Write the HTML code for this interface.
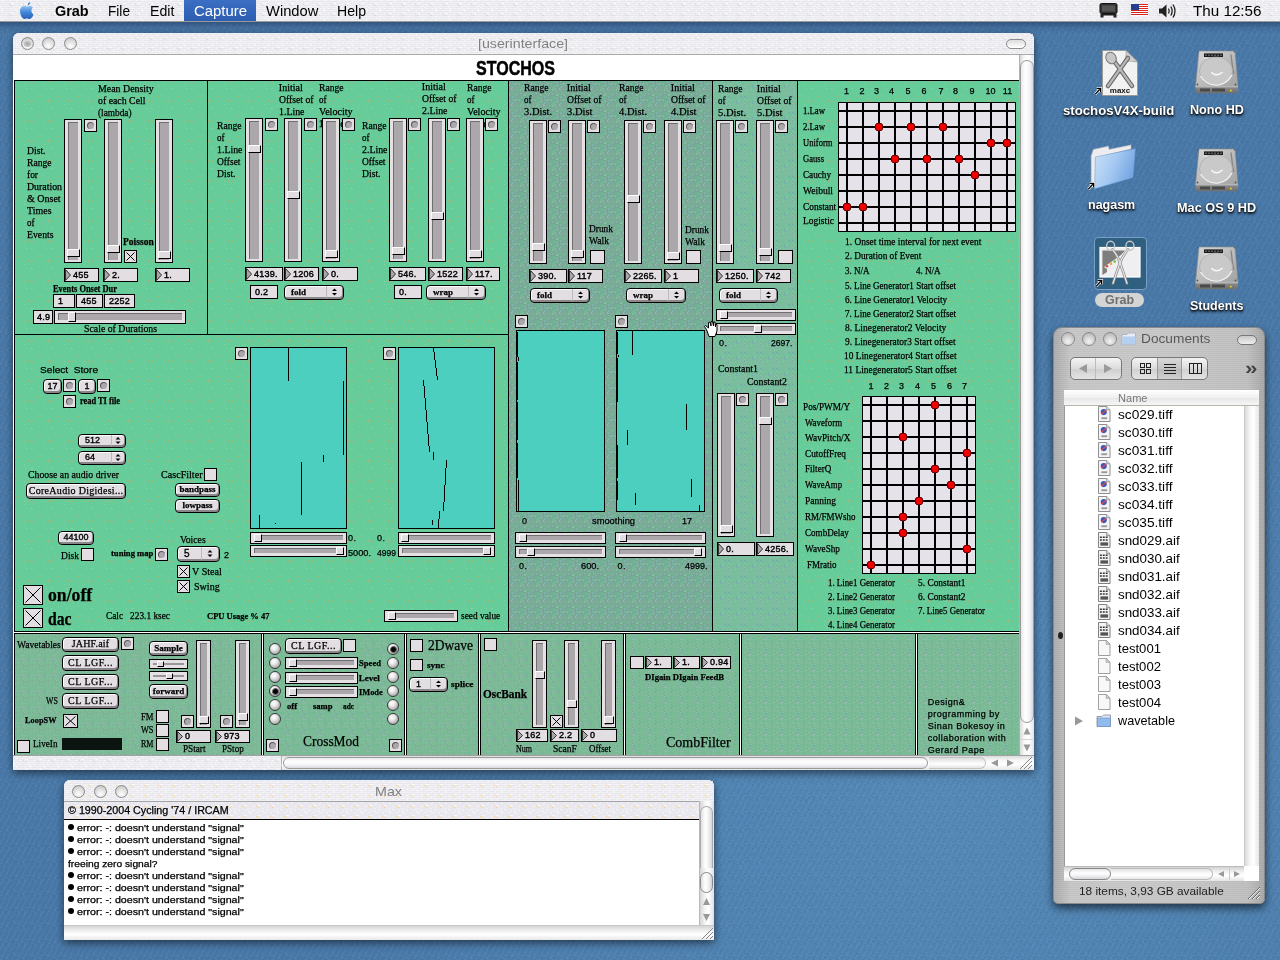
<!DOCTYPE html><html><head><meta charset="utf-8"><title>STOCHOS</title><style>
html,body{margin:0;padding:0}
body{width:1280px;height:960px;overflow:hidden;position:relative;background:#4979A9;font-family:"Liberation Sans",sans-serif;}
div{position:absolute;box-sizing:border-box}
.t{white-space:pre;transform-origin:0 50%;color:#000}
.ts{font-family:"Liberation Serif",serif;-webkit-text-stroke:0.25px #000}
.tn{font-family:"Liberation Sans",sans-serif}
.tk{-webkit-text-stroke:0.25px #000}
.tm{font-family:"Liberation Mono",monospace}
.sl{border:1px solid #000;background:#E4E0E4}
.trk{background:#ABA7AB;border-left:1px solid #6f6f6f;border-top:1px solid #6f6f6f}
.kn{background:#E0DCE0;border-top:1px solid #fff;border-left:1px solid #fff;border-right:1px solid #000;border-bottom:1px solid #000}
.bx{border:1px solid #000;background:#E2DEE2}
.bc{border-radius:50%;background:#ABA7AB;border-top:1px solid #555;border-left:1px solid #555}
.pb{border:1px solid #000;border-radius:4px;background:#E2DEE2;box-shadow:inset -1px -2px 0 #8a868a, inset 1px 1px 0 #fff}
.ra{border-radius:50%;border:1px solid #3a3a3a;background:radial-gradient(circle at 38% 32%,#fff 0%,#ececec 30%,#a4a4a4 80%,#777 100%)}
.rd{left:1.5px;top:1.5px;right:1.5px;bottom:1.5px;border-radius:50%;background:#000;border:1.5px solid #666}
.pin{background:repeating-linear-gradient(180deg,#F1F1F5 0,#F1F1F5 1px,#E7E7EC 1px,#E7E7EC 2px)}
.pg{background:#66CC99}
.pd{background:#74AE92}
.pm{background:#7ABD9C}
.pbm{background:#7ABB96}
.bk{background:#000}
.wb{border-radius:50%;border:1px solid #8c8c8c;background:radial-gradient(circle at 50% 75%,#fff 0%,#e4e4e4 45%,#bdbdbd 100%)}
.cy{background:#4DCFC0;border:1px solid #000}
.lbl{color:#fff;font-weight:bold;text-shadow:0 1px 2px #000,0 1px 1px #000}
</style></head><body><div id="w" style="left:0;top:0;width:1280px;height:960px;will-change:transform">
<svg width="0" height="0" style="position:absolute"><defs><pattern id="dg" width="20" height="20" patternUnits="userSpaceOnUse"><rect x="4" y="18" width="1" height="1" fill="#D9A05B" opacity="0.55"/><rect x="2" y="8" width="1" height="1" fill="#D9A05B" opacity="0.55"/><rect x="3" y="15" width="1" height="1" fill="#D9A05B" opacity="0.55"/><rect x="14" y="15" width="1" height="1" fill="#D9A05B" opacity="0.55"/><rect x="12" y="6" width="1" height="1" fill="#D9A05B" opacity="0.55"/><rect x="0" y="12" width="1" height="1" fill="#D9A05B" opacity="0.55"/><rect x="13" y="19" width="1" height="1" fill="#D9A05B" opacity="0.55"/><rect x="0" y="14" width="1" height="1" fill="#D9A05B" opacity="0.55"/><rect x="8" y="7" width="1" height="1" fill="#D9A05B" opacity="0.55"/><rect x="18" y="3" width="1" height="1" fill="#D9A05B" opacity="0.55"/><rect x="10" y="0" width="1" height="1" fill="#D9A05B" opacity="0.55"/><rect x="0" y="0" width="1" height="1" fill="#D9A05B" opacity="0.55"/><rect x="17" y="0" width="1" height="1" fill="#D9A05B" opacity="0.55"/><rect x="13" y="0" width="1" height="1" fill="#D9A05B" opacity="0.55"/><rect x="16" y="7" width="1" height="1" fill="#8ad6b0" opacity="0.7"/><rect x="17" y="7" width="1" height="1" fill="#8ad6b0" opacity="0.7"/><rect x="11" y="7" width="1" height="1" fill="#8ad6b0" opacity="0.7"/><rect x="7" y="14" width="1" height="1" fill="#8ad6b0" opacity="0.7"/><rect x="9" y="0" width="1" height="1" fill="#8ad6b0" opacity="0.7"/><rect x="13" y="17" width="1" height="1" fill="#8ad6b0" opacity="0.7"/><rect x="3" y="5" width="1" height="1" fill="#8ad6b0" opacity="0.7"/><rect x="9" y="3" width="1" height="1" fill="#8ad6b0" opacity="0.7"/></pattern><pattern id="dd" width="16" height="16" patternUnits="userSpaceOnUse"><rect x="1" y="2" width="1" height="1" fill="#9A96B0" opacity="0.6"/><rect x="2" y="11" width="1" height="1" fill="#9A96B0" opacity="0.6"/><rect x="5" y="9" width="1" height="1" fill="#9A96B0" opacity="0.6"/><rect x="8" y="6" width="1" height="1" fill="#9A96B0" opacity="0.6"/><rect x="1" y="5" width="1" height="1" fill="#9A96B0" opacity="0.6"/><rect x="13" y="12" width="1" height="1" fill="#9A96B0" opacity="0.6"/><rect x="11" y="14" width="1" height="1" fill="#9A96B0" opacity="0.6"/><rect x="8" y="1" width="1" height="1" fill="#9A96B0" opacity="0.6"/><rect x="0" y="11" width="1" height="1" fill="#9A96B0" opacity="0.6"/><rect x="14" y="10" width="1" height="1" fill="#9A96B0" opacity="0.6"/><rect x="12" y="13" width="1" height="1" fill="#9A96B0" opacity="0.6"/><rect x="5" y="5" width="1" height="1" fill="#9A96B0" opacity="0.6"/><rect x="7" y="7" width="1" height="1" fill="#9A96B0" opacity="0.6"/><rect x="0" y="5" width="1" height="1" fill="#9A96B0" opacity="0.6"/><rect x="10" y="5" width="1" height="1" fill="#9A96B0" opacity="0.6"/><rect x="4" y="11" width="1" height="1" fill="#9A96B0" opacity="0.6"/><rect x="5" y="14" width="1" height="1" fill="#9A96B0" opacity="0.6"/><rect x="13" y="11" width="1" height="1" fill="#9A96B0" opacity="0.6"/><rect x="11" y="11" width="1" height="1" fill="#9A96B0" opacity="0.6"/><rect x="14" y="5" width="1" height="1" fill="#9A96B0" opacity="0.6"/><rect x="12" y="14" width="1" height="1" fill="#9A96B0" opacity="0.6"/><rect x="7" y="15" width="1" height="1" fill="#9A96B0" opacity="0.6"/><rect x="8" y="15" width="1" height="1" fill="#9A96B0" opacity="0.6"/><rect x="14" y="11" width="1" height="1" fill="#9A96B0" opacity="0.6"/><rect x="14" y="15" width="1" height="1" fill="#9A96B0" opacity="0.6"/><rect x="7" y="10" width="1" height="1" fill="#9A96B0" opacity="0.6"/><rect x="5" y="8" width="1" height="1" fill="#9A96B0" opacity="0.6"/><rect x="15" y="9" width="1" height="1" fill="#9A96B0" opacity="0.6"/><rect x="9" y="13" width="1" height="1" fill="#9A96B0" opacity="0.6"/><rect x="9" y="6" width="1" height="1" fill="#9A96B0" opacity="0.6"/><rect x="15" y="11" width="1" height="1" fill="#9A96B0" opacity="0.6"/><rect x="2" y="10" width="1" height="1" fill="#9A96B0" opacity="0.6"/><rect x="0" y="6" width="1" height="1" fill="#9A96B0" opacity="0.6"/><rect x="3" y="1" width="1" height="1" fill="#9A96B0" opacity="0.6"/><rect x="1" y="8" width="1" height="1" fill="#9A96B0" opacity="0.6"/><rect x="7" y="3" width="1" height="1" fill="#9A96B0" opacity="0.6"/><rect x="4" y="8" width="1" height="1" fill="#9A96B0" opacity="0.6"/><rect x="7" y="6" width="1" height="1" fill="#9A96B0" opacity="0.6"/><rect x="1" y="13" width="1" height="1" fill="#9A96B0" opacity="0.6"/><rect x="1" y="1" width="1" height="1" fill="#9A96B0" opacity="0.6"/><rect x="5" y="7" width="1" height="1" fill="#9A96B0" opacity="0.6"/><rect x="0" y="2" width="1" height="1" fill="#9A96B0" opacity="0.6"/><rect x="3" y="2" width="1" height="1" fill="#9A96B0" opacity="0.6"/><rect x="0" y="1" width="1" height="1" fill="#9A96B0" opacity="0.6"/><rect x="8" y="4" width="1" height="1" fill="#9A96B0" opacity="0.6"/><rect x="0" y="12" width="1" height="1" fill="#9A96B0" opacity="0.6"/><rect x="1" y="7" width="1" height="1" fill="#9A96B0" opacity="0.6"/><rect x="4" y="1" width="1" height="1" fill="#9A96B0" opacity="0.6"/><rect x="3" y="9" width="1" height="1" fill="#9A96B0" opacity="0.6"/><rect x="10" y="15" width="1" height="1" fill="#9A96B0" opacity="0.6"/><rect x="0" y="9" width="1" height="1" fill="#9A96B0" opacity="0.6"/><rect x="14" y="1" width="1" height="1" fill="#9A96B0" opacity="0.6"/><rect x="8" y="12" width="1" height="1" fill="#86D0A6" opacity="0.6"/><rect x="4" y="15" width="1" height="1" fill="#86D0A6" opacity="0.6"/><rect x="7" y="2" width="1" height="1" fill="#86D0A6" opacity="0.6"/><rect x="10" y="3" width="1" height="1" fill="#86D0A6" opacity="0.6"/><rect x="0" y="14" width="1" height="1" fill="#86D0A6" opacity="0.6"/><rect x="4" y="12" width="1" height="1" fill="#86D0A6" opacity="0.6"/><rect x="15" y="10" width="1" height="1" fill="#86D0A6" opacity="0.6"/><rect x="4" y="10" width="1" height="1" fill="#86D0A6" opacity="0.6"/><rect x="8" y="8" width="1" height="1" fill="#86D0A6" opacity="0.6"/><rect x="13" y="0" width="1" height="1" fill="#86D0A6" opacity="0.6"/><rect x="4" y="5" width="1" height="1" fill="#86D0A6" opacity="0.6"/><rect x="5" y="3" width="1" height="1" fill="#86D0A6" opacity="0.6"/><rect x="14" y="7" width="1" height="1" fill="#86D0A6" opacity="0.6"/><rect x="7" y="14" width="1" height="1" fill="#86D0A6" opacity="0.6"/><rect x="2" y="8" width="1" height="1" fill="#86D0A6" opacity="0.6"/><rect x="2" y="7" width="1" height="1" fill="#86D0A6" opacity="0.6"/><rect x="11" y="8" width="1" height="1" fill="#86D0A6" opacity="0.6"/><rect x="13" y="8" width="1" height="1" fill="#86D0A6" opacity="0.6"/><rect x="0" y="4" width="1" height="1" fill="#86D0A6" opacity="0.6"/><rect x="1" y="12" width="1" height="1" fill="#86D0A6" opacity="0.6"/><rect x="13" y="5" width="1" height="1" fill="#86D0A6" opacity="0.6"/><rect x="3" y="0" width="1" height="1" fill="#86D0A6" opacity="0.6"/><rect x="3" y="6" width="1" height="1" fill="#86D0A6" opacity="0.6"/><rect x="14" y="9" width="1" height="1" fill="#86D0A6" opacity="0.6"/><rect x="12" y="6" width="1" height="1" fill="#86D0A6" opacity="0.6"/><rect x="6" y="13" width="1" height="1" fill="#86D0A6" opacity="0.6"/><rect x="0" y="3" width="1" height="1" fill="#86D0A6" opacity="0.6"/><rect x="11" y="9" width="1" height="1" fill="#86D0A6" opacity="0.6"/><rect x="0" y="13" width="1" height="1" fill="#86D0A6" opacity="0.6"/><rect x="3" y="3" width="1" height="1" fill="#86D0A6" opacity="0.6"/><rect x="15" y="14" width="1" height="1" fill="#86D0A6" opacity="0.6"/><rect x="6" y="2" width="1" height="1" fill="#86D0A6" opacity="0.6"/><rect x="9" y="2" width="1" height="1" fill="#86D0A6" opacity="0.6"/><rect x="6" y="3" width="1" height="1" fill="#86D0A6" opacity="0.6"/><rect x="11" y="12" width="1" height="1" fill="#86D0A6" opacity="0.6"/><rect x="14" y="4" width="1" height="1" fill="#86D0A6" opacity="0.6"/><rect x="3" y="8" width="1" height="1" fill="#86D0A6" opacity="0.6"/><rect x="15" y="1" width="1" height="1" fill="#86D0A6" opacity="0.6"/><rect x="15" y="13" width="1" height="1" fill="#86D0A6" opacity="0.6"/><rect x="12" y="7" width="1" height="1" fill="#86D0A6" opacity="0.6"/><rect x="5" y="15" width="1" height="1" fill="#6A8AC8" opacity="0.45"/><rect x="8" y="13" width="1" height="1" fill="#6A8AC8" opacity="0.45"/><rect x="2" y="3" width="1" height="1" fill="#6A8AC8" opacity="0.45"/><rect x="5" y="4" width="1" height="1" fill="#6A8AC8" opacity="0.45"/><rect x="13" y="2" width="1" height="1" fill="#6A8AC8" opacity="0.45"/><rect x="2" y="1" width="1" height="1" fill="#6A8AC8" opacity="0.45"/><rect x="4" y="9" width="1" height="1" fill="#6A8AC8" opacity="0.45"/><rect x="10" y="14" width="1" height="1" fill="#6A8AC8" opacity="0.45"/><rect x="3" y="4" width="1" height="1" fill="#6A8AC8" opacity="0.45"/><rect x="13" y="3" width="1" height="1" fill="#6A8AC8" opacity="0.45"/></pattern><pattern id="dm" width="16" height="16" patternUnits="userSpaceOnUse"><rect x="7" y="4" width="1" height="1" fill="#6A8AC8" opacity="0.5"/><rect x="11" y="15" width="1" height="1" fill="#6A8AC8" opacity="0.5"/><rect x="2" y="0" width="1" height="1" fill="#6A8AC8" opacity="0.5"/><rect x="15" y="8" width="1" height="1" fill="#6A8AC8" opacity="0.5"/><rect x="7" y="6" width="1" height="1" fill="#6A8AC8" opacity="0.5"/><rect x="15" y="15" width="1" height="1" fill="#6A8AC8" opacity="0.5"/><rect x="12" y="4" width="1" height="1" fill="#6A8AC8" opacity="0.5"/><rect x="12" y="0" width="1" height="1" fill="#6A8AC8" opacity="0.5"/><rect x="2" y="5" width="1" height="1" fill="#6A8AC8" opacity="0.5"/><rect x="1" y="9" width="1" height="1" fill="#B4B0C8" opacity="0.55"/><rect x="0" y="8" width="1" height="1" fill="#B4B0C8" opacity="0.55"/><rect x="15" y="12" width="1" height="1" fill="#B4B0C8" opacity="0.55"/><rect x="13" y="12" width="1" height="1" fill="#B4B0C8" opacity="0.55"/><rect x="14" y="4" width="1" height="1" fill="#B4B0C8" opacity="0.55"/><rect x="11" y="3" width="1" height="1" fill="#B4B0C8" opacity="0.55"/><rect x="1" y="4" width="1" height="1" fill="#B4B0C8" opacity="0.55"/><rect x="15" y="6" width="1" height="1" fill="#B4B0C8" opacity="0.55"/><rect x="8" y="13" width="1" height="1" fill="#B4B0C8" opacity="0.55"/><rect x="9" y="13" width="1" height="1" fill="#B4B0C8" opacity="0.55"/><rect x="12" y="11" width="1" height="1" fill="#B4B0C8" opacity="0.55"/><rect x="13" y="7" width="1" height="1" fill="#B4B0C8" opacity="0.55"/><rect x="10" y="0" width="1" height="1" fill="#70D8A8" opacity="0.6"/><rect x="8" y="5" width="1" height="1" fill="#70D8A8" opacity="0.6"/><rect x="10" y="3" width="1" height="1" fill="#70D8A8" opacity="0.6"/><rect x="6" y="8" width="1" height="1" fill="#70D8A8" opacity="0.6"/><rect x="9" y="3" width="1" height="1" fill="#70D8A8" opacity="0.6"/><rect x="2" y="15" width="1" height="1" fill="#70D8A8" opacity="0.6"/><rect x="15" y="2" width="1" height="1" fill="#70D8A8" opacity="0.6"/><rect x="11" y="2" width="1" height="1" fill="#70D8A8" opacity="0.6"/><rect x="13" y="4" width="1" height="1" fill="#70D8A8" opacity="0.6"/><rect x="0" y="9" width="1" height="1" fill="#70D8A8" opacity="0.6"/><rect x="13" y="13" width="1" height="1" fill="#70D8A8" opacity="0.6"/><rect x="3" y="1" width="1" height="1" fill="#70D8A8" opacity="0.6"/><rect x="1" y="12" width="1" height="1" fill="#70D8A8" opacity="0.6"/><rect x="10" y="8" width="1" height="1" fill="#70D8A8" opacity="0.6"/><rect x="7" y="1" width="1" height="1" fill="#70D8A8" opacity="0.6"/><rect x="9" y="0" width="1" height="1" fill="#70D8A8" opacity="0.6"/><rect x="2" y="3" width="1" height="1" fill="#70D8A8" opacity="0.6"/><rect x="1" y="6" width="1" height="1" fill="#70D8A8" opacity="0.6"/></pattern><pattern id="db" width="16" height="16" patternUnits="userSpaceOnUse"><rect x="7" y="9" width="1" height="1" fill="#B4B0C8" opacity="0.5"/><rect x="3" y="12" width="1" height="1" fill="#B4B0C8" opacity="0.5"/><rect x="15" y="4" width="1" height="1" fill="#B4B0C8" opacity="0.5"/><rect x="2" y="2" width="1" height="1" fill="#B4B0C8" opacity="0.5"/><rect x="0" y="12" width="1" height="1" fill="#B4B0C8" opacity="0.5"/><rect x="9" y="1" width="1" height="1" fill="#B4B0C8" opacity="0.5"/><rect x="7" y="11" width="1" height="1" fill="#B4B0C8" opacity="0.5"/><rect x="8" y="5" width="1" height="1" fill="#B4B0C8" opacity="0.5"/><rect x="3" y="8" width="1" height="1" fill="#B4B0C8" opacity="0.5"/><rect x="6" y="0" width="1" height="1" fill="#B4B0C8" opacity="0.5"/><rect x="8" y="8" width="1" height="1" fill="#B4B0C8" opacity="0.5"/><rect x="6" y="5" width="1" height="1" fill="#B4B0C8" opacity="0.5"/><rect x="9" y="9" width="1" height="1" fill="#B4B0C8" opacity="0.5"/><rect x="11" y="2" width="1" height="1" fill="#B4B0C8" opacity="0.5"/><rect x="10" y="12" width="1" height="1" fill="#B4B0C8" opacity="0.5"/><rect x="7" y="5" width="1" height="1" fill="#B4B0C8" opacity="0.5"/><rect x="7" y="15" width="1" height="1" fill="#9A86A8" opacity="0.45"/><rect x="8" y="2" width="1" height="1" fill="#9A86A8" opacity="0.45"/><rect x="9" y="0" width="1" height="1" fill="#9A86A8" opacity="0.45"/><rect x="6" y="13" width="1" height="1" fill="#9A86A8" opacity="0.45"/><rect x="13" y="9" width="1" height="1" fill="#9A86A8" opacity="0.45"/><rect x="13" y="14" width="1" height="1" fill="#9A86A8" opacity="0.45"/><rect x="5" y="7" width="1" height="1" fill="#9A86A8" opacity="0.45"/><rect x="9" y="8" width="1" height="1" fill="#9A86A8" opacity="0.45"/><rect x="1" y="2" width="1" height="1" fill="#9A86A8" opacity="0.45"/><rect x="1" y="14" width="1" height="1" fill="#9A86A8" opacity="0.45"/><rect x="8" y="15" width="1" height="1" fill="#6A8AC8" opacity="0.4"/><rect x="10" y="4" width="1" height="1" fill="#6A8AC8" opacity="0.4"/><rect x="6" y="2" width="1" height="1" fill="#6A8AC8" opacity="0.4"/><rect x="13" y="6" width="1" height="1" fill="#6A8AC8" opacity="0.4"/><rect x="14" y="8" width="1" height="1" fill="#6A8AC8" opacity="0.4"/><rect x="5" y="11" width="1" height="1" fill="#6A8AC8" opacity="0.4"/><rect x="13" y="10" width="1" height="1" fill="#6A8AC8" opacity="0.4"/><rect x="6" y="10" width="1" height="1" fill="#6A8AC8" opacity="0.4"/><rect x="3" y="1" width="1" height="1" fill="#86D0A6" opacity="0.5"/><rect x="7" y="8" width="1" height="1" fill="#86D0A6" opacity="0.5"/><rect x="7" y="3" width="1" height="1" fill="#86D0A6" opacity="0.5"/><rect x="10" y="5" width="1" height="1" fill="#86D0A6" opacity="0.5"/><rect x="9" y="14" width="1" height="1" fill="#86D0A6" opacity="0.5"/><rect x="0" y="1" width="1" height="1" fill="#86D0A6" opacity="0.5"/><rect x="9" y="10" width="1" height="1" fill="#86D0A6" opacity="0.5"/><rect x="0" y="10" width="1" height="1" fill="#86D0A6" opacity="0.5"/><rect x="4" y="13" width="1" height="1" fill="#86D0A6" opacity="0.5"/><rect x="2" y="9" width="1" height="1" fill="#86D0A6" opacity="0.5"/><rect x="6" y="14" width="1" height="1" fill="#86D0A6" opacity="0.5"/><rect x="9" y="4" width="1" height="1" fill="#86D0A6" opacity="0.5"/><rect x="8" y="12" width="1" height="1" fill="#86D0A6" opacity="0.5"/><rect x="5" y="10" width="1" height="1" fill="#86D0A6" opacity="0.5"/></pattern><pattern id="dw" width="14" height="10" patternUnits="userSpaceOnUse"><rect x="9" y="4" width="1" height="1" fill="#E8C870" opacity="0.7"/><rect x="11" y="5" width="1" height="1" fill="#E8C870" opacity="0.7"/><rect x="12" y="8" width="1" height="1" fill="#ffffff" opacity="0.7"/><rect x="0" y="7" width="1" height="1" fill="#ffffff" opacity="0.7"/><rect x="12" y="3" width="1" height="1" fill="#ffffff" opacity="0.7"/><rect x="10" y="0" width="1" height="1" fill="#ffffff" opacity="0.7"/><rect x="2" y="1" width="1" height="1" fill="#ffffff" opacity="0.7"/><rect x="5" y="7" width="1" height="1" fill="#ffffff" opacity="0.7"/><rect x="13" y="3" width="1" height="1" fill="#ffffff" opacity="0.7"/><rect x="6" y="8" width="1" height="1" fill="#ffffff" opacity="0.7"/><rect x="1" y="9" width="1" height="1" fill="#ffffff" opacity="0.7"/><rect x="3" y="0" width="1" height="1" fill="#ffffff" opacity="0.7"/><rect x="11" y="3" width="1" height="1" fill="#ffffff" opacity="0.7"/><rect x="6" y="4" width="1" height="1" fill="#ffffff" opacity="0.7"/><rect x="2" y="6" width="1" height="1" fill="#ffffff" opacity="0.7"/><rect x="2" y="9" width="1" height="1" fill="#ffffff" opacity="0.7"/></pattern><pattern id="dk" width="16" height="16" patternUnits="userSpaceOnUse"><rect x="2" y="15" width="1" height="1" fill="#7AA2CC" opacity="0.22"/><rect x="8" y="1" width="1" height="1" fill="#7AA2CC" opacity="0.22"/><rect x="0" y="4" width="1" height="1" fill="#7AA2CC" opacity="0.22"/><rect x="15" y="11" width="1" height="1" fill="#7AA2CC" opacity="0.22"/><rect x="10" y="0" width="1" height="1" fill="#7AA2CC" opacity="0.22"/><rect x="8" y="15" width="1" height="1" fill="#7AA2CC" opacity="0.22"/><rect x="6" y="13" width="1" height="1" fill="#7AA2CC" opacity="0.22"/><rect x="3" y="6" width="1" height="1" fill="#7AA2CC" opacity="0.22"/><rect x="8" y="2" width="1" height="1" fill="#7AA2CC" opacity="0.22"/><rect x="13" y="10" width="1" height="1" fill="#7AA2CC" opacity="0.22"/><rect x="2" y="11" width="1" height="1" fill="#7AA2CC" opacity="0.22"/><rect x="13" y="8" width="1" height="1" fill="#7AA2CC" opacity="0.22"/><rect x="14" y="3" width="1" height="1" fill="#7AA2CC" opacity="0.22"/><rect x="6" y="9" width="1" height="1" fill="#7AA2CC" opacity="0.22"/><rect x="3" y="1" width="1" height="1" fill="#7AA2CC" opacity="0.22"/><rect x="6" y="11" width="1" height="1" fill="#7AA2CC" opacity="0.22"/><rect x="15" y="6" width="1" height="1" fill="#7AA2CC" opacity="0.22"/><rect x="0" y="11" width="1" height="1" fill="#7AA2CC" opacity="0.22"/><rect x="7" y="13" width="1" height="1" fill="#7AA2CC" opacity="0.22"/><rect x="9" y="11" width="1" height="1" fill="#7AA2CC" opacity="0.22"/><rect x="3" y="2" width="1" height="1" fill="#7AA2CC" opacity="0.22"/><rect x="6" y="3" width="1" height="1" fill="#7AA2CC" opacity="0.22"/><rect x="8" y="9" width="1" height="1" fill="#3A6A98" opacity="0.3"/><rect x="6" y="12" width="1" height="1" fill="#3A6A98" opacity="0.3"/><rect x="15" y="7" width="1" height="1" fill="#3A6A98" opacity="0.3"/><rect x="4" y="6" width="1" height="1" fill="#3A6A98" opacity="0.3"/><rect x="0" y="6" width="1" height="1" fill="#3A6A98" opacity="0.3"/><rect x="5" y="0" width="1" height="1" fill="#3A6A98" opacity="0.3"/><rect x="10" y="9" width="1" height="1" fill="#3A6A98" opacity="0.3"/><rect x="11" y="12" width="1" height="1" fill="#3A6A98" opacity="0.3"/><rect x="12" y="9" width="1" height="1" fill="#3A6A98" opacity="0.3"/><rect x="4" y="15" width="1" height="1" fill="#3A6A98" opacity="0.3"/><rect x="1" y="5" width="1" height="1" fill="#3A6A98" opacity="0.3"/><rect x="13" y="12" width="1" height="1" fill="#3A6A98" opacity="0.3"/><rect x="3" y="14" width="1" height="1" fill="#3A6A98" opacity="0.3"/><rect x="7" y="2" width="1" height="1" fill="#3A6A98" opacity="0.3"/><rect x="14" y="14" width="1" height="1" fill="#3A6A98" opacity="0.3"/><rect x="12" y="2" width="1" height="1" fill="#3A6A98" opacity="0.3"/><rect x="13" y="15" width="1" height="1" fill="#3A6A98" opacity="0.3"/><rect x="9" y="13" width="1" height="1" fill="#3A6A98" opacity="0.3"/><rect x="2" y="6" width="1" height="1" fill="#3A6A98" opacity="0.3"/><rect x="8" y="14" width="1" height="1" fill="#3A6A98" opacity="0.3"/><rect x="15" y="5" width="1" height="1" fill="#3A6A98" opacity="0.3"/><rect x="0" y="0" width="1" height="1" fill="#3A6A98" opacity="0.3"/></pattern></defs></svg>
<div style="left:0;top:0;width:1280px;height:960px;background:radial-gradient(ellipse 620px 520px at 940px 800px,rgba(96,152,196,0.55),rgba(96,152,196,0.25) 60%,rgba(96,152,196,0) 100%)"></div>
<div style="left:0;top:0;width:1280px;height:960px;background:repeating-linear-gradient(118deg,rgba(255,255,255,0.018) 0,rgba(255,255,255,0.018) 2px,rgba(0,0,0,0.018) 2px,rgba(0,0,0,0.018) 5px)"></div>
<svg width="1280" height="960" style="position:absolute;left:0px;top:0px"><rect width="1280" height="960" fill="url(#dk)"/></svg>
<svg width="0" height="0" style="position:absolute"><defs><linearGradient id="hdg" x1="0" y1="0" x2="1" y2="1"><stop offset="0" stop-color="#d6d6d6"/><stop offset="0.500" stop-color="#bcbcbc"/><stop offset="1" stop-color="#a2a2a2"/></linearGradient><linearGradient id="hdf" x1="0" y1="0" x2="0" y2="1"><stop offset="0" stop-color="#8e8e8e"/><stop offset="1" stop-color="#6e6e6e"/></linearGradient><linearGradient id="fog" x1="0" y1="0.300" x2="1" y2="0.700"><stop offset="0" stop-color="#c4dcf6"/><stop offset="0.450" stop-color="#a4c8f2"/><stop offset="1" stop-color="#6c9fe0"/></linearGradient></defs></svg>
<svg width="36" height="46" viewBox="0 0 36 46" style="position:absolute;left:1102px;top:50px"><path d="M0.500 0.500H24L35.500 12V45.500H0.500Z" fill="#f2f2f2" stroke="#9a9a9a" stroke-width="1"/><path d="M24 0.500Q25 8 21 12Q28 10 35.500 12Z" fill="#d4d4d4" stroke="#9a9a9a" stroke-width="0.800"/><path d="M6 36L26 8M30 36L10 8" stroke="#666" stroke-width="4.500" stroke-linecap="round"/><path d="M6 36L26 8M30 36L10 8" stroke="#b8b8b8" stroke-width="2.200" stroke-linecap="round"/><ellipse cx="9" cy="8" rx="5" ry="6" fill="#c8c8c8" stroke="#777" transform="rotate(-30 9 8)"/><text x="18" y="43" font-family="Liberation Sans, sans-serif" font-weight="bold" font-size="8" text-anchor="middle" fill="#111">maxc</text></svg>
<svg width="8" height="8" viewBox="0 0 9 9" style="position:absolute;left:1094px;top:87px"><rect x="0" y="0" width="9" height="9" fill="#fff" opacity="0.0"/><path d="M1.500 8L6.500 2.500M3 1.500H7.500V6" stroke="#fff" stroke-width="3" fill="none"/><path d="M1.500 8L6.500 2.500M3 1.500H7.500V6" stroke="#000" stroke-width="1.500" fill="none"/></svg>
<svg width="44" height="44" viewBox="0 0 44 44" style="position:absolute;left:1195px;top:50px"><path d="M4 1H40L43 36.500H0.500Z" fill="url(#hdg)" stroke="#8a8a8a" stroke-width="0.600"/><path d="M0.500 36.500H43V42Q43 43.300 41.500 43.300H2Q0.500 43.300 0.500 42Z" fill="url(#hdf)"/><path d="M0.500 36.800H43" stroke="#d8d8d8" stroke-width="0.800"/><rect x="9" y="3.400" width="19" height="3.600" fill="#1c1c1c"/><path d="M10 5.200H27" stroke="#777" stroke-width="1" stroke-dasharray="2 1"/><path d="M8.500 8.300H29" stroke="#e8e8e8" stroke-width="0.900"/><path d="M36 4.500L37.500 17L38.800 24" stroke="#858585" stroke-width="1.300" fill="none"/><ellipse cx="21" cy="21" rx="16.500" ry="14" fill="#c9c9c9" stroke="#a4a4a4" stroke-width="0.600"/><path d="M5.500 26Q12 36.500 24 34.800Q33 33 36.800 25" stroke="#f4f4f4" stroke-width="1.300" fill="none"/><path d="M16.300 22.300Q21.500 27.500 27.500 22" stroke="#fafafa" stroke-width="1.500" fill="none"/><circle cx="2.800" cy="1.800" r="0.800" fill="#555"/><circle cx="39.500" cy="1.800" r="0.800" fill="#555"/><circle cx="2.500" cy="34.500" r="0.900" fill="#555"/><circle cx="40.500" cy="34.500" r="0.900" fill="#555"/><path d="M5 40H15M17 40H30" stroke="#4a4a4a" stroke-width="3"/><rect x="35" y="39.800" width="1.600" height="1.600" fill="#e8e020"/></svg>
<svg width="44" height="44" viewBox="0 0 44 44" style="position:absolute;left:1195px;top:148px"><path d="M4 1H40L43 36.500H0.500Z" fill="url(#hdg)" stroke="#8a8a8a" stroke-width="0.600"/><path d="M0.500 36.500H43V42Q43 43.300 41.500 43.300H2Q0.500 43.300 0.500 42Z" fill="url(#hdf)"/><path d="M0.500 36.800H43" stroke="#d8d8d8" stroke-width="0.800"/><rect x="9" y="3.400" width="19" height="3.600" fill="#1c1c1c"/><path d="M10 5.200H27" stroke="#777" stroke-width="1" stroke-dasharray="2 1"/><path d="M8.500 8.300H29" stroke="#e8e8e8" stroke-width="0.900"/><path d="M36 4.500L37.500 17L38.800 24" stroke="#858585" stroke-width="1.300" fill="none"/><ellipse cx="21" cy="21" rx="16.500" ry="14" fill="#c9c9c9" stroke="#a4a4a4" stroke-width="0.600"/><path d="M5.500 26Q12 36.500 24 34.800Q33 33 36.800 25" stroke="#f4f4f4" stroke-width="1.300" fill="none"/><path d="M16.300 22.300Q21.500 27.500 27.500 22" stroke="#fafafa" stroke-width="1.500" fill="none"/><circle cx="2.800" cy="1.800" r="0.800" fill="#555"/><circle cx="39.500" cy="1.800" r="0.800" fill="#555"/><circle cx="2.500" cy="34.500" r="0.900" fill="#555"/><circle cx="40.500" cy="34.500" r="0.900" fill="#555"/><path d="M5 40H15M17 40H30" stroke="#4a4a4a" stroke-width="3"/><rect x="35" y="39.800" width="1.600" height="1.600" fill="#e8e020"/></svg>
<svg width="44" height="44" viewBox="0 0 44 44" style="position:absolute;left:1195px;top:246px"><path d="M4 1H40L43 36.500H0.500Z" fill="url(#hdg)" stroke="#8a8a8a" stroke-width="0.600"/><path d="M0.500 36.500H43V42Q43 43.300 41.500 43.300H2Q0.500 43.300 0.500 42Z" fill="url(#hdf)"/><path d="M0.500 36.800H43" stroke="#d8d8d8" stroke-width="0.800"/><rect x="9" y="3.400" width="19" height="3.600" fill="#1c1c1c"/><path d="M10 5.200H27" stroke="#777" stroke-width="1" stroke-dasharray="2 1"/><path d="M8.500 8.300H29" stroke="#e8e8e8" stroke-width="0.900"/><path d="M36 4.500L37.500 17L38.800 24" stroke="#858585" stroke-width="1.300" fill="none"/><ellipse cx="21" cy="21" rx="16.500" ry="14" fill="#c9c9c9" stroke="#a4a4a4" stroke-width="0.600"/><path d="M5.500 26Q12 36.500 24 34.800Q33 33 36.800 25" stroke="#f4f4f4" stroke-width="1.300" fill="none"/><path d="M16.300 22.300Q21.500 27.500 27.500 22" stroke="#fafafa" stroke-width="1.500" fill="none"/><circle cx="2.800" cy="1.800" r="0.800" fill="#555"/><circle cx="39.500" cy="1.800" r="0.800" fill="#555"/><circle cx="2.500" cy="34.500" r="0.900" fill="#555"/><circle cx="40.500" cy="34.500" r="0.900" fill="#555"/><path d="M5 40H15M17 40H30" stroke="#4a4a4a" stroke-width="3"/><rect x="35" y="39.800" width="1.600" height="1.600" fill="#e8e020"/></svg>
<svg width="50" height="48" viewBox="0 0 50 48" style="position:absolute;left:1088px;top:144px"><path d="M3.200 41V12L5.400 5.400L20.400 2.200L21 5.500L43 1V5L8 13.500L6.800 41Z" fill="#EDEDF0" stroke="#bdbdc4" stroke-width="0.600"/><path d="M7.300 13L47.300 4.750L45 33.500L6.700 44.750Z" fill="url(#fog)" stroke="#6f9bd4" stroke-width="0.500"/></svg>
<svg width="8" height="8" viewBox="0 0 9 9" style="position:absolute;left:1087px;top:182px"><rect x="0" y="0" width="9" height="9" fill="#fff" opacity="0.0"/><path d="M1.500 8L6.500 2.500M3 1.500H7.500V6" stroke="#fff" stroke-width="3" fill="none"/><path d="M1.500 8L6.500 2.500M3 1.500H7.500V6" stroke="#000" stroke-width="1.500" fill="none"/></svg>
<div style="left:1093.5px;top:236.5px;width:53px;height:53px;border-radius:4px;background:#30607F;border:1.500px solid #7a9fc6"></div>
<svg width="46" height="48" viewBox="0 0 46 48" style="position:absolute;left:1098px;top:240px"><rect x="2" y="7.500" width="40" height="29.500" fill="#efeff1" stroke="#fff" stroke-width="1.200"/><path d="M4.400 10.500H27L23 15L9 25V32L4.400 35Z" fill="#7e7e7c"/><path d="M6 27L22 16.500V20.500L9.500 29.500Z" fill="#ececec"/><circle cx="9" cy="26.200" r="1.200" fill="#e0483a"/><circle cx="13" cy="23.700" r="1.200" fill="#eaa030"/><circle cx="16.700" cy="21.500" r="1.200" fill="#68b838"/><path d="M14.500 9.500Q20 16 22.500 24L29 43.400M30 9.500Q24 17 21.500 24L15 43.400" stroke="#8a8a8a" stroke-width="2.600" stroke-linecap="round" fill="none"/><path d="M14.500 9.500Q20 16 22.500 24L29 43.400M30 9.500Q24 17 21.500 24L15 43.400" stroke="#e4e4e4" stroke-width="1.300" stroke-linecap="round" fill="none"/><ellipse cx="12.600" cy="5.800" rx="4" ry="4.500" fill="none" stroke="#c8c8c8" stroke-width="1.400"/><ellipse cx="31.900" cy="5.800" rx="4" ry="4.500" fill="none" stroke="#c8c8c8" stroke-width="1.400"/></svg>
<svg width="8" height="8" viewBox="0 0 9 9" style="position:absolute;left:1095px;top:279px"><rect x="0" y="0" width="9" height="9" fill="#fff" opacity="0.0"/><path d="M1.500 8L6.500 2.500M3 1.500H7.500V6" stroke="#fff" stroke-width="3" fill="none"/><path d="M1.500 8L6.500 2.500M3 1.500H7.500V6" stroke="#000" stroke-width="1.500" fill="none"/></svg>
<div style="left:1095px;top:293px;width:49px;height:14px;border-radius:7px;background:#D4D4D4"></div>
<div class="t tn" style="left:1104.5px;top:293px;font-size:12px;line-height:14px;color:#6e6e6e;font-weight:bold;transform:scaleX(1.035);">Grab</div>
<div class="t tn" style="left:1063.4px;top:104px;font-size:12px;line-height:14px;color:#fff;font-weight:bold;transform:scaleX(1.098);text-shadow:0 1px 2px #000,0 2px 3px rgba(0,0,0,0.8);">stochosV4X-build</div>
<div class="t tn" style="left:1190.0px;top:103px;font-size:12px;line-height:14px;color:#fff;font-weight:bold;transform:scaleX(1.052);text-shadow:0 1px 2px #000,0 2px 3px rgba(0,0,0,0.8);">Nono HD</div>
<div class="t tn" style="left:1088.4px;top:198px;font-size:12px;line-height:14px;color:#fff;font-weight:bold;transform:scaleX(1.041);text-shadow:0 1px 2px #000,0 2px 3px rgba(0,0,0,0.8);">nagasm</div>
<div class="t tn" style="left:1177.4px;top:201px;font-size:12px;line-height:14px;color:#fff;font-weight:bold;transform:scaleX(1.060);text-shadow:0 1px 2px #000,0 2px 3px rgba(0,0,0,0.8);">Mac OS 9 HD</div>
<div class="t tn" style="left:1189.6px;top:299px;font-size:12px;line-height:14px;color:#fff;font-weight:bold;transform:scaleX(1.040);text-shadow:0 1px 2px #000,0 2px 3px rgba(0,0,0,0.8);">Students</div>
<div style="left:13px;top:33px;width:1021px;height:737px;background:#fff;border-radius:6px 6px 0 0;box-shadow:0 3px 8px rgba(0,0,0,0.55);overflow:hidden"><div class="pin" style="left:0;top:0;width:1021px;height:22px;border-bottom:1px solid #a8a8a8"></div></div>
<svg width="1019" height="20" style="position:absolute;left:14px;top:34px"><rect width="1019" height="20" fill="url(#dw)"/></svg>
<div class="wb" style="left:21.25px;top:37.25px;width:13px;height:13px;"></div>
<div class="wb" style="left:42.25px;top:37.25px;width:13px;height:13px;"></div>
<div class="wb" style="left:63.5px;top:37.25px;width:13px;height:13px;"></div>
<div style="left:24.25px;top:40.5px;width:7px;height:6px;border-radius:50%;background:radial-gradient(#888,#c4c4c4);opacity:0.7"></div>
<div style="left:1006px;top:39px;width:20px;height:10px;border-radius:5px;border:1px solid #8c8c8c;background:linear-gradient(#ddd,#fff)"></div>
<div class="t tn" style="left:478.0px;top:36px;font-size:13px;line-height:15px;color:#808080;transform:scaleX(1.093);">[userinterface]</div>
<div class="t tn" style="left:476.0px;top:57px;font-size:20px;line-height:22px;font-weight:bold;transform:scaleX(0.802);-webkit-text-stroke:0.5px #000;">STOCHOS</div>
<div class="bk" style="left:14px;top:80px;width:1006px;height:1px;"></div>
<div class="bk" style="left:14px;top:80px;width:1px;height:552px;"></div>
<div class="pg" style="left:15px;top:81px;width:1005px;height:551px;"></div>
<svg width="1005" height="551" style="position:absolute;left:15px;top:81px"><rect width="1005" height="551" fill="url(#dg)"/></svg>
<div class="pd" style="left:509px;top:81px;width:203px;height:550px;"></div>
<svg width="203" height="550" style="position:absolute;left:509px;top:81px"><rect width="203" height="550" fill="url(#dd)"/></svg>
<div class="pm" style="left:713px;top:81px;width:84px;height:550px;"></div>
<svg width="84" height="550" style="position:absolute;left:713px;top:81px"><rect width="84" height="550" fill="url(#dm)"/></svg>
<div class="bk" style="left:207px;top:81px;width:1px;height:254px;"></div>
<div class="bk" style="left:15px;top:334px;width:493px;height:1px;"></div>
<div class="bk" style="left:508px;top:81px;width:1px;height:551px;"></div>
<div class="bk" style="left:712px;top:81px;width:1px;height:551px;"></div>
<div class="bk" style="left:797px;top:81px;width:1px;height:551px;"></div>
<div class="bk" style="left:14px;top:631px;width:1006px;height:1px;"></div>
<div style="left:14px;top:632px;width:1006px;height:1px;background:#fff"></div>
<div class="pbm" style="left:14px;top:633px;width:249px;height:123px;border:1px solid #000;border-bottom:none"></div>
<svg width="247" height="122" style="position:absolute;left:15px;top:634px"><rect width="247" height="122" fill="url(#db)"/></svg>
<div class="pbm" style="left:263px;top:633px;width:143px;height:123px;border:1px solid #000;border-bottom:none"></div>
<svg width="141" height="122" style="position:absolute;left:264px;top:634px"><rect width="141" height="122" fill="url(#db)"/></svg>
<div class="pbm" style="left:406px;top:633px;width:74px;height:123px;border:1px solid #000;border-bottom:none"></div>
<svg width="72" height="122" style="position:absolute;left:407px;top:634px"><rect width="72" height="122" fill="url(#db)"/></svg>
<div class="pbm" style="left:480px;top:633px;width:145px;height:123px;border:1px solid #000;border-bottom:none"></div>
<svg width="143" height="122" style="position:absolute;left:481px;top:634px"><rect width="143" height="122" fill="url(#db)"/></svg>
<div class="pbm" style="left:625px;top:633px;width:116px;height:123px;border:1px solid #000;border-bottom:none"></div>
<svg width="114" height="122" style="position:absolute;left:626px;top:634px"><rect width="114" height="122" fill="url(#db)"/></svg>
<div class="pbm" style="left:741px;top:633px;width:176px;height:123px;border:1px solid #000;border-bottom:none"></div>
<svg width="174" height="122" style="position:absolute;left:742px;top:634px"><rect width="174" height="122" fill="url(#db)"/></svg>
<div class="pbm" style="left:917px;top:633px;width:103px;height:123px;border:1px solid #000;border-bottom:none"></div>
<svg width="101" height="122" style="position:absolute;left:918px;top:634px"><rect width="101" height="122" fill="url(#db)"/></svg>
<div style="left:262.0px;top:634px;width:1px;height:121px;background:#fff;left:262px"></div>
<div class="bk" style="left:261px;top:633px;width:1px;height:122px;"></div>
<div class="bk" style="left:263px;top:633px;width:1px;height:122px;"></div>
<div style="left:405.0px;top:634px;width:1px;height:121px;background:#fff;left:405px"></div>
<div class="bk" style="left:404px;top:633px;width:1px;height:122px;"></div>
<div class="bk" style="left:406px;top:633px;width:1px;height:122px;"></div>
<div style="left:479.0px;top:634px;width:1px;height:121px;background:#fff;left:479px"></div>
<div class="bk" style="left:478px;top:633px;width:1px;height:122px;"></div>
<div class="bk" style="left:480px;top:633px;width:1px;height:122px;"></div>
<div style="left:624.0px;top:634px;width:1px;height:121px;background:#fff;left:624px"></div>
<div class="bk" style="left:623px;top:633px;width:1px;height:122px;"></div>
<div class="bk" style="left:625px;top:633px;width:1px;height:122px;"></div>
<div style="left:740.0px;top:634px;width:1px;height:121px;background:#fff;left:740px"></div>
<div class="bk" style="left:739px;top:633px;width:1px;height:122px;"></div>
<div class="bk" style="left:741px;top:633px;width:1px;height:122px;"></div>
<div style="left:916.0px;top:634px;width:1px;height:121px;background:#fff;left:916px"></div>
<div class="bk" style="left:915px;top:633px;width:1px;height:122px;"></div>
<div class="bk" style="left:917px;top:633px;width:1px;height:122px;"></div>
<div style="left:1019px;top:55px;width:15px;height:700px;background:linear-gradient(90deg,#d8d8d8,#f8f8f8 30%,#fff 60%,#e4e4e4);border-left:1px solid #b0b0b0"></div>
<div style="left:1020px;top:60px;width:14px;height:663px;border-radius:7px;border:1px solid #9a9a9a;background:linear-gradient(90deg,#e8e8ec,#fff 35%,#f4f4f8 70%,#d8d8dc)"></div>
<svg width="14" height="31" style="position:absolute;left:1020px;top:724px"><path d="M7 3.500L10.500 10.500H3.500ZM7 27.500L10.500 20.500H3.500Z" fill="#999"/><path d="M1 15.500H13" stroke="#d4d4d4"/></svg>
<div style="left:13px;top:755px;width:1021px;height:15px;background:linear-gradient(180deg,#dcdcdc,#f6f6f6 30%,#fff 60%,#e6e6e6);border-top:1px solid #a0a0a0"></div>
<div class="pin" style="left:14px;top:756px;width:268px;height:14px;border-right:1px solid #b4b4b4"></div>
<svg width="268" height="14" style="position:absolute;left:14px;top:756px"><rect width="268" height="14" fill="url(#dw)"/></svg>
<div style="left:929px;top:757px;width:57px;height:12px;border-radius:0 6px 6px 0;border:1px solid #c4c4c4;border-left:none;background:linear-gradient(180deg,#dcdcdc,#f4f4f4 40%,#fff 60%,#e4e4e4)"></div>
<div style="left:283px;top:757px;width:645px;height:12px;border-radius:6px;border:1px solid #9a9a9a;background:linear-gradient(180deg,#e8e8ec,#fff 35%,#f4f4f8 70%,#d8d8dc)"></div>
<svg width="50" height="14" style="position:absolute;left:983px;top:756px"><path d="M8 7L15 3.500V10.500ZM31 7L24 3.500V10.500Z" fill="#999"/><path d="M37 13L49 1M41 13L49 5M45 13L49 9" stroke="#888"/></svg>
<div class="t ts" style="left:98.0px;top:83px;font-size:10px;line-height:11px;transform:scaleX(0.989);">Mean Density</div>
<div class="t ts" style="left:98.0px;top:95px;font-size:10px;line-height:11px;transform:scaleX(0.983);">of each Cell</div>
<div class="t ts" style="left:98.0px;top:107px;font-size:10px;line-height:11px;transform:scaleX(0.928);">(lambda)</div>
<div class="t ts" style="left:27.0px;top:145px;font-size:10px;line-height:11px;transform:scaleX(0.965);">Dist.</div>
<div class="t ts" style="left:27.0px;top:157px;font-size:10px;line-height:11px;transform:scaleX(0.959);">Range</div>
<div class="t ts" style="left:27.0px;top:169px;font-size:10px;line-height:11px;transform:scaleX(0.943);">for</div>
<div class="t ts" style="left:27.0px;top:181px;font-size:10px;line-height:11px;transform:scaleX(0.985);">Duration</div>
<div class="t ts" style="left:27.0px;top:193px;font-size:10px;line-height:11px;">&amp; Onset</div>
<div class="t ts" style="left:27.0px;top:205px;font-size:10px;line-height:11px;transform:scaleX(0.994);">Times</div>
<div class="t ts" style="left:27.0px;top:217px;font-size:10px;line-height:11px;transform:scaleX(0.900);">of</div>
<div class="t ts" style="left:27.0px;top:229px;font-size:10px;line-height:11px;transform:scaleX(0.974);">Events</div>
<div class="sl" style="left:64px;top:119px;width:18px;height:144px"><div class="trk" style="left:3px;top:2px;width:10px;height:138px"></div><div class="kn" style="left:2px;top:129px;width:13px;height:8px"></div></div>
<div class="sl" style="left:104px;top:119px;width:18px;height:144px"><div class="trk" style="left:3px;top:2px;width:10px;height:138px"></div><div class="kn" style="left:2px;top:125px;width:13px;height:8px"></div></div>
<div class="sl" style="left:155px;top:119px;width:18px;height:144px"><div class="trk" style="left:3px;top:2px;width:10px;height:138px"></div><div class="kn" style="left:2px;top:131px;width:13px;height:8px"></div></div>
<div class="bx" style="left:84px;top:119px;width:13px;height:13px"><div class="bc" style="left:2.0px;top:2.0px;width:7px;height:7px"></div></div>
<div class="t ts" style="left:123.0px;top:236px;font-size:10px;line-height:11px;font-weight:bold;transform:scaleX(0.954);">Poisson</div>
<div class="bx" style="left:124px;top:250px;width:13px;height:13px"><svg width="11" height="11" style="position:absolute;left:0;top:0"><path d="M1.5 1.5L9.5 9.5M9.5 1.5L1.5 9.5" stroke="#000" stroke-width="1" fill="none"/></svg></div>
<div class="bx" style="left:64px;top:268px;width:35px;height:14px"><svg width="7" height="12" style="position:absolute;left:0;top:0"><path d="M0.5 0.5L5.5 6.0L0.5 11.5Z" fill="#aaa6aa" stroke="#222" stroke-width="0.9"/></svg><div class="t tn" style="left:8px;top:-0.5px;font-size:9px;line-height:12px;letter-spacing:0.25px;-webkit-text-stroke:0.4px #000;">455</div></div>
<div class="bx" style="left:103px;top:268px;width:35px;height:14px"><svg width="7" height="12" style="position:absolute;left:0;top:0"><path d="M0.5 0.5L5.5 6.0L0.5 11.5Z" fill="#aaa6aa" stroke="#222" stroke-width="0.9"/></svg><div class="t tn" style="left:8px;top:-0.5px;font-size:9px;line-height:12px;letter-spacing:0.25px;-webkit-text-stroke:0.4px #000;">2.</div></div>
<div class="bx" style="left:155px;top:268px;width:35px;height:14px"><svg width="7" height="12" style="position:absolute;left:0;top:0"><path d="M0.5 0.5L5.5 6.0L0.5 11.5Z" fill="#aaa6aa" stroke="#222" stroke-width="0.9"/></svg><div class="t tn" style="left:8px;top:-0.5px;font-size:9px;line-height:12px;letter-spacing:0.25px;-webkit-text-stroke:0.4px #000;">1.</div></div>
<div class="t ts" style="left:53.2px;top:283px;font-size:10px;line-height:11px;font-weight:bold;transform:scaleX(0.841);">Events Onset Dur</div>
<div class="bx" style="left:53px;top:294px;width:22px;height:14px"><div class="t tn" style="left:4px;top:-0.5px;font-size:9px;line-height:12px;letter-spacing:0.25px;-webkit-text-stroke:0.4px #000;">1</div></div>
<div class="bx" style="left:76px;top:294px;width:27px;height:14px"><div class="t tn" style="left:4px;top:-0.5px;font-size:9px;line-height:12px;letter-spacing:0.25px;-webkit-text-stroke:0.4px #000;">455</div></div>
<div class="bx" style="left:104px;top:294px;width:31px;height:14px"><div class="t tn" style="left:4px;top:-0.5px;font-size:9px;line-height:12px;letter-spacing:0.25px;-webkit-text-stroke:0.4px #000;">2252</div></div>
<div class="bx" style="left:33px;top:310px;width:20px;height:14px"><div class="t tn" style="left:3px;top:-0.5px;font-size:9px;line-height:12px;letter-spacing:0.25px;-webkit-text-stroke:0.4px #000;">4.9</div></div>
<div class="sl" style="left:54px;top:310px;width:132px;height:14px"><div class="trk" style="left:3px;top:2px;width:124px;height:7px"></div><div class="kn" style="left:13px;top:1px;width:8px;height:10px"></div></div>
<div class="t ts" style="left:84.0px;top:323px;font-size:10px;line-height:11px;transform:scaleX(0.981);">Scale of Durations</div>
<div class="t ts" style="left:216.8px;top:120px;font-size:10px;line-height:11px;transform:scaleX(0.959);">Range</div>
<div class="t ts" style="left:216.8px;top:132px;font-size:10px;line-height:11px;transform:scaleX(0.900);">of</div>
<div class="t ts" style="left:216.8px;top:144px;font-size:10px;line-height:11px;transform:scaleX(0.987);">1.Line</div>
<div class="t ts" style="left:216.8px;top:156px;font-size:10px;line-height:11px;transform:scaleX(0.947);">Offset</div>
<div class="t ts" style="left:216.8px;top:168px;font-size:10px;line-height:11px;transform:scaleX(0.965);">Dist.</div>
<div class="t ts" style="left:278.8px;top:82px;font-size:10px;line-height:11px;">Initial</div>
<div class="t ts" style="left:278.8px;top:94px;font-size:10px;line-height:11px;transform:scaleX(0.968);">Offset of</div>
<div class="t ts" style="left:278.8px;top:106px;font-size:10px;line-height:11px;transform:scaleX(0.987);">1.Line</div>
<div class="t ts" style="left:318.8px;top:82px;font-size:10px;line-height:11px;transform:scaleX(0.959);">Range</div>
<div class="t ts" style="left:318.8px;top:94px;font-size:10px;line-height:11px;transform:scaleX(0.900);">of</div>
<div class="t ts" style="left:318.8px;top:106px;font-size:10px;line-height:11px;transform:scaleX(1.005);">Velocity</div>
<div class="t ts" style="left:318.8px;top:118px;font-size:10px;line-height:11px;">1.Line</div>
<div class="t ts" style="left:361.8px;top:120px;font-size:10px;line-height:11px;transform:scaleX(0.959);">Range</div>
<div class="t ts" style="left:361.8px;top:132px;font-size:10px;line-height:11px;transform:scaleX(0.900);">of</div>
<div class="t ts" style="left:361.8px;top:144px;font-size:10px;line-height:11px;transform:scaleX(0.987);">2.Line</div>
<div class="t ts" style="left:361.8px;top:156px;font-size:10px;line-height:11px;transform:scaleX(0.947);">Offset</div>
<div class="t ts" style="left:361.8px;top:168px;font-size:10px;line-height:11px;transform:scaleX(0.965);">Dist.</div>
<div class="t ts" style="left:421.8px;top:81px;font-size:10px;line-height:11px;">Initial</div>
<div class="t ts" style="left:421.8px;top:93px;font-size:10px;line-height:11px;transform:scaleX(0.968);">Offset of</div>
<div class="t ts" style="left:421.8px;top:105px;font-size:10px;line-height:11px;transform:scaleX(0.987);">2.Line</div>
<div class="t ts" style="left:466.8px;top:82px;font-size:10px;line-height:11px;transform:scaleX(0.959);">Range</div>
<div class="t ts" style="left:466.8px;top:94px;font-size:10px;line-height:11px;transform:scaleX(0.900);">of</div>
<div class="t ts" style="left:466.8px;top:106px;font-size:10px;line-height:11px;transform:scaleX(1.005);">Velocity</div>
<div class="t ts" style="left:466.8px;top:118px;font-size:10px;line-height:11px;">2.Line</div>
<div class="sl" style="left:245px;top:118px;width:18px;height:144px"><div class="trk" style="left:3px;top:2px;width:10px;height:138px"></div><div class="kn" style="left:2px;top:26px;width:13px;height:8px"></div></div>
<div class="sl" style="left:284px;top:118px;width:18px;height:144px"><div class="trk" style="left:3px;top:2px;width:10px;height:138px"></div><div class="kn" style="left:2px;top:72px;width:13px;height:8px"></div></div>
<div class="sl" style="left:322px;top:118px;width:18px;height:144px"><div class="trk" style="left:3px;top:2px;width:10px;height:138px"></div><div class="kn" style="left:2px;top:131px;width:13px;height:8px"></div></div>
<div class="sl" style="left:389px;top:118px;width:18px;height:144px"><div class="trk" style="left:3px;top:2px;width:10px;height:138px"></div><div class="kn" style="left:2px;top:128px;width:13px;height:8px"></div></div>
<div class="sl" style="left:428px;top:118px;width:18px;height:144px"><div class="trk" style="left:3px;top:2px;width:10px;height:138px"></div><div class="kn" style="left:2px;top:93px;width:13px;height:8px"></div></div>
<div class="sl" style="left:466px;top:118px;width:18px;height:144px"><div class="trk" style="left:3px;top:2px;width:10px;height:138px"></div><div class="kn" style="left:2px;top:131px;width:13px;height:8px"></div></div>
<div class="bx" style="left:265px;top:118px;width:13px;height:13px"><div class="bc" style="left:2.0px;top:2.0px;width:7px;height:7px"></div></div>
<div class="bx" style="left:304px;top:118px;width:13px;height:13px"><div class="bc" style="left:2.0px;top:2.0px;width:7px;height:7px"></div></div>
<div class="bx" style="left:342px;top:118px;width:13px;height:13px"><div class="bc" style="left:2.0px;top:2.0px;width:7px;height:7px"></div></div>
<div class="bx" style="left:408px;top:118px;width:13px;height:13px"><div class="bc" style="left:2.0px;top:2.0px;width:7px;height:7px"></div></div>
<div class="bx" style="left:447px;top:118px;width:13px;height:13px"><div class="bc" style="left:2.0px;top:2.0px;width:7px;height:7px"></div></div>
<div class="bx" style="left:485px;top:118px;width:13px;height:13px"><div class="bc" style="left:2.0px;top:2.0px;width:7px;height:7px"></div></div>
<div class="bx" style="left:245px;top:267px;width:38px;height:14px"><svg width="7" height="12" style="position:absolute;left:0;top:0"><path d="M0.5 0.5L5.5 6.0L0.5 11.5Z" fill="#aaa6aa" stroke="#222" stroke-width="0.9"/></svg><div class="t tn" style="left:8px;top:-0.5px;font-size:9px;line-height:12px;letter-spacing:0.25px;-webkit-text-stroke:0.4px #000;">4139.</div></div>
<div class="bx" style="left:284px;top:267px;width:35px;height:14px"><svg width="7" height="12" style="position:absolute;left:0;top:0"><path d="M0.5 0.5L5.5 6.0L0.5 11.5Z" fill="#aaa6aa" stroke="#222" stroke-width="0.9"/></svg><div class="t tn" style="left:8px;top:-0.5px;font-size:9px;line-height:12px;letter-spacing:0.25px;-webkit-text-stroke:0.4px #000;">1206</div></div>
<div class="bx" style="left:322px;top:267px;width:36px;height:14px"><svg width="7" height="12" style="position:absolute;left:0;top:0"><path d="M0.5 0.5L5.5 6.0L0.5 11.5Z" fill="#aaa6aa" stroke="#222" stroke-width="0.9"/></svg><div class="t tn" style="left:8px;top:-0.5px;font-size:9px;line-height:12px;letter-spacing:0.25px;-webkit-text-stroke:0.4px #000;">0.</div></div>
<div class="bx" style="left:389px;top:267px;width:37px;height:14px"><svg width="7" height="12" style="position:absolute;left:0;top:0"><path d="M0.5 0.5L5.5 6.0L0.5 11.5Z" fill="#aaa6aa" stroke="#222" stroke-width="0.9"/></svg><div class="t tn" style="left:8px;top:-0.5px;font-size:9px;line-height:12px;letter-spacing:0.25px;-webkit-text-stroke:0.4px #000;">546.</div></div>
<div class="bx" style="left:428px;top:267px;width:35px;height:14px"><svg width="7" height="12" style="position:absolute;left:0;top:0"><path d="M0.5 0.5L5.5 6.0L0.5 11.5Z" fill="#aaa6aa" stroke="#222" stroke-width="0.9"/></svg><div class="t tn" style="left:8px;top:-0.5px;font-size:9px;line-height:12px;letter-spacing:0.25px;-webkit-text-stroke:0.4px #000;">1522</div></div>
<div class="bx" style="left:466px;top:267px;width:34px;height:14px"><svg width="7" height="12" style="position:absolute;left:0;top:0"><path d="M0.5 0.5L5.5 6.0L0.5 11.5Z" fill="#aaa6aa" stroke="#222" stroke-width="0.9"/></svg><div class="t tn" style="left:8px;top:-0.5px;font-size:9px;line-height:12px;letter-spacing:0.25px;-webkit-text-stroke:0.4px #000;">117.</div></div>
<div class="bx" style="left:250px;top:285px;width:28px;height:14px"><div class="t tn" style="left:4px;top:-0.5px;font-size:9px;line-height:12px;letter-spacing:0.25px;-webkit-text-stroke:0.4px #000;">0.2</div></div>
<div class="pb" style="left:284px;top:285px;width:60px;height:15px"><div class="t ts" style="left:6px;top:-0.5px;font-size:9px;line-height:12px;font-weight:bold;">fold</div><div style="left:41px;top:0;width:1px;height:12px;background:#bbb"></div><svg width="60" height="15" style="position:absolute;left:0;top:0"><path d="M47.0 5.0L49.5 2.5L52.0 5.0ZM47.0 7.0L49.5 9.5L52.0 7.0Z" fill="#000"/></svg></div>
<div class="bx" style="left:394px;top:285px;width:28px;height:14px"><div class="t tn" style="left:4px;top:-0.5px;font-size:9px;line-height:12px;letter-spacing:0.25px;-webkit-text-stroke:0.4px #000;">0.</div></div>
<div class="pb" style="left:426px;top:285px;width:60px;height:15px"><div class="t ts" style="left:6px;top:-0.5px;font-size:9px;line-height:12px;font-weight:bold;">wrap</div><div style="left:41px;top:0;width:1px;height:12px;background:#bbb"></div><svg width="60" height="15" style="position:absolute;left:0;top:0"><path d="M47.0 5.0L49.5 2.5L52.0 5.0ZM47.0 7.0L49.5 9.5L52.0 7.0Z" fill="#000"/></svg></div>
<div class="t ts" style="left:523.8px;top:82px;font-size:10px;line-height:11px;transform:scaleX(0.959);">Range</div>
<div class="t ts" style="left:523.8px;top:94px;font-size:10px;line-height:11px;transform:scaleX(0.900);">of</div>
<div class="t ts" style="left:523.8px;top:106px;font-size:10px;line-height:11px;transform:scaleX(1.050);">3.Dist.</div>
<div class="t ts" style="left:566.8px;top:82px;font-size:10px;line-height:11px;">Initial</div>
<div class="t ts" style="left:566.8px;top:94px;font-size:10px;line-height:11px;transform:scaleX(0.968);">Offset of</div>
<div class="t ts" style="left:566.8px;top:106px;font-size:10px;line-height:11px;transform:scaleX(1.055);">3.Dist</div>
<div class="t ts" style="left:618.8px;top:82px;font-size:10px;line-height:11px;transform:scaleX(0.959);">Range</div>
<div class="t ts" style="left:618.8px;top:94px;font-size:10px;line-height:11px;transform:scaleX(0.900);">of</div>
<div class="t ts" style="left:618.8px;top:106px;font-size:10px;line-height:11px;transform:scaleX(1.050);">4.Dist.</div>
<div class="t ts" style="left:670.8px;top:82px;font-size:10px;line-height:11px;">Initial</div>
<div class="t ts" style="left:670.8px;top:94px;font-size:10px;line-height:11px;transform:scaleX(0.968);">Offset of</div>
<div class="t ts" style="left:670.8px;top:106px;font-size:10px;line-height:11px;transform:scaleX(1.055);">4.Dist</div>
<div class="t ts" style="left:589.2px;top:223px;font-size:10px;line-height:11px;transform:scaleX(0.939);">Drunk</div>
<div class="t ts" style="left:589.2px;top:235px;font-size:10px;line-height:11px;transform:scaleX(0.959);">Walk</div>
<div class="t ts" style="left:685.0px;top:224px;font-size:10px;line-height:11px;transform:scaleX(0.939);">Drunk</div>
<div class="t ts" style="left:685.0px;top:236px;font-size:10px;line-height:11px;transform:scaleX(0.959);">Walk</div>
<div class="sl" style="left:529px;top:120px;width:18px;height:144px"><div class="trk" style="left:3px;top:2px;width:10px;height:138px"></div><div class="kn" style="left:2px;top:122px;width:13px;height:8px"></div></div>
<div class="sl" style="left:568px;top:120px;width:18px;height:144px"><div class="trk" style="left:3px;top:2px;width:10px;height:138px"></div><div class="kn" style="left:2px;top:129px;width:13px;height:8px"></div></div>
<div class="sl" style="left:624px;top:120px;width:18px;height:144px"><div class="trk" style="left:3px;top:2px;width:10px;height:138px"></div><div class="kn" style="left:2px;top:74px;width:13px;height:8px"></div></div>
<div class="sl" style="left:664px;top:120px;width:18px;height:144px"><div class="trk" style="left:3px;top:2px;width:10px;height:138px"></div><div class="kn" style="left:2px;top:131px;width:13px;height:8px"></div></div>
<div class="bx" style="left:548px;top:120px;width:13px;height:13px"><div class="bc" style="left:2.0px;top:2.0px;width:7px;height:7px"></div></div>
<div class="bx" style="left:587px;top:120px;width:13px;height:13px"><div class="bc" style="left:2.0px;top:2.0px;width:7px;height:7px"></div></div>
<div class="bx" style="left:643px;top:120px;width:13px;height:13px"><div class="bc" style="left:2.0px;top:2.0px;width:7px;height:7px"></div></div>
<div class="bx" style="left:683px;top:120px;width:13px;height:13px"><div class="bc" style="left:2.0px;top:2.0px;width:7px;height:7px"></div></div>
<div class="bx" style="left:590px;top:250px;width:15px;height:14px"></div>
<div class="bx" style="left:686px;top:250px;width:15px;height:14px"></div>
<div class="bx" style="left:529px;top:269px;width:38px;height:14px"><svg width="7" height="12" style="position:absolute;left:0;top:0"><path d="M0.5 0.5L5.5 6.0L0.5 11.5Z" fill="#aaa6aa" stroke="#222" stroke-width="0.9"/></svg><div class="t tn" style="left:8px;top:-0.5px;font-size:9px;line-height:12px;letter-spacing:0.25px;-webkit-text-stroke:0.4px #000;">390.</div></div>
<div class="bx" style="left:568px;top:269px;width:35px;height:14px"><svg width="7" height="12" style="position:absolute;left:0;top:0"><path d="M0.5 0.5L5.5 6.0L0.5 11.5Z" fill="#aaa6aa" stroke="#222" stroke-width="0.9"/></svg><div class="t tn" style="left:8px;top:-0.5px;font-size:9px;line-height:12px;letter-spacing:0.25px;-webkit-text-stroke:0.4px #000;">117</div></div>
<div class="bx" style="left:624px;top:269px;width:38px;height:14px"><svg width="7" height="12" style="position:absolute;left:0;top:0"><path d="M0.5 0.5L5.5 6.0L0.5 11.5Z" fill="#aaa6aa" stroke="#222" stroke-width="0.9"/></svg><div class="t tn" style="left:8px;top:-0.5px;font-size:9px;line-height:12px;letter-spacing:0.25px;-webkit-text-stroke:0.4px #000;">2265.</div></div>
<div class="bx" style="left:664px;top:269px;width:35px;height:14px"><svg width="7" height="12" style="position:absolute;left:0;top:0"><path d="M0.5 0.5L5.5 6.0L0.5 11.5Z" fill="#aaa6aa" stroke="#222" stroke-width="0.9"/></svg><div class="t tn" style="left:8px;top:-0.5px;font-size:9px;line-height:12px;letter-spacing:0.25px;-webkit-text-stroke:0.4px #000;">1</div></div>
<div class="pb" style="left:530px;top:288px;width:60px;height:15px"><div class="t ts" style="left:6px;top:-0.5px;font-size:9px;line-height:12px;font-weight:bold;">fold</div><div style="left:41px;top:0;width:1px;height:12px;background:#bbb"></div><svg width="60" height="15" style="position:absolute;left:0;top:0"><path d="M47.0 5.0L49.5 2.5L52.0 5.0ZM47.0 7.0L49.5 9.5L52.0 7.0Z" fill="#000"/></svg></div>
<div class="pb" style="left:626px;top:288px;width:60px;height:15px"><div class="t ts" style="left:6px;top:-0.5px;font-size:9px;line-height:12px;font-weight:bold;">wrap</div><div style="left:41px;top:0;width:1px;height:12px;background:#bbb"></div><svg width="60" height="15" style="position:absolute;left:0;top:0"><path d="M47.0 5.0L49.5 2.5L52.0 5.0ZM47.0 7.0L49.5 9.5L52.0 7.0Z" fill="#000"/></svg></div>
<div class="bx" style="left:515px;top:315px;width:13px;height:13px"><div class="bc" style="left:2.0px;top:2.0px;width:7px;height:7px"></div></div>
<div class="bx" style="left:615px;top:315px;width:13px;height:13px"><div class="bc" style="left:2.0px;top:2.0px;width:7px;height:7px"></div></div>
<div class="cy" style="left:516px;top:330px;width:89px;height:182px;"></div>
<div class="cy" style="left:616px;top:330px;width:89px;height:182px;"></div>
<div class="bk" style="left:517px;top:332px;width:1px;height:25px;"></div>
<div class="bk" style="left:517px;top:362px;width:1px;height:38px;"></div>
<div class="bk" style="left:517px;top:402px;width:1px;height:38px;"></div>
<div class="bk" style="left:517px;top:443px;width:1px;height:35px;"></div>
<div class="bk" style="left:518px;top:480px;width:1px;height:31px;"></div>
<div class="bk" style="left:518px;top:357px;width:1px;height:4px;"></div>
<div class="bk" style="left:617px;top:332px;width:1px;height:22px;"></div>
<div class="bk" style="left:617px;top:358px;width:1px;height:44px;"></div>
<div class="bk" style="left:617px;top:445px;width:1px;height:33px;"></div>
<div class="bk" style="left:617px;top:481px;width:1px;height:19px;"></div>
<div class="bk" style="left:618px;top:355px;width:1px;height:2px;"></div>
<div class="bk" style="left:632px;top:331px;width:1px;height:24px;"></div>
<div class="bk" style="left:686px;top:404px;width:1px;height:26px;"></div>
<div class="bk" style="left:627px;top:430px;width:1px;height:15px;"></div>
<div class="bk" style="left:691px;top:479px;width:1px;height:18px;"></div>
<div class="bk" style="left:635px;top:493px;width:1px;height:12px;"></div>
<div class="bk" style="left:699px;top:505px;width:1px;height:6px;"></div>
<div class="t tn tk" style="left:522.0px;top:516px;font-size:9px;line-height:10px;">0</div>
<div class="t tn tk" style="left:592.0px;top:516px;font-size:9px;line-height:10px;transform:scaleX(1.036);">smoothing</div>
<div class="t tn tk" style="left:682.0px;top:516px;font-size:9px;line-height:10px;">17</div>
<div class="sl" style="left:515px;top:532px;width:91px;height:12px"><div class="trk" style="left:3px;top:2px;width:83px;height:5px"></div><div class="kn" style="left:3px;top:1px;width:8px;height:8px"></div></div>
<div class="sl" style="left:515px;top:546px;width:91px;height:12px"><div class="trk" style="left:3px;top:2px;width:83px;height:5px"></div><div class="kn" style="left:11px;top:1px;width:8px;height:8px"></div></div>
<div class="sl" style="left:615px;top:532px;width:91px;height:12px"><div class="trk" style="left:3px;top:2px;width:83px;height:5px"></div><div class="kn" style="left:3px;top:1px;width:8px;height:8px"></div></div>
<div class="sl" style="left:615px;top:546px;width:91px;height:12px"><div class="trk" style="left:3px;top:2px;width:83px;height:5px"></div><div class="kn" style="left:78px;top:1px;width:8px;height:8px"></div></div>
<div class="t tn tk" style="left:519.0px;top:561px;font-size:9px;line-height:10px;letter-spacing:0.6px;">0.</div>
<div class="t tn tk" style="left:581.0px;top:561px;font-size:9px;line-height:10px;transform:scaleX(1.028);">600.</div>
<div class="t tn tk" style="left:617.5px;top:561px;font-size:9px;line-height:10px;letter-spacing:0.6px;">0.</div>
<div class="t tn tk" style="left:685.0px;top:561px;font-size:9px;line-height:10px;">4999.</div>
<div class="t ts" style="left:717.5px;top:83px;font-size:10px;line-height:11px;transform:scaleX(0.959);">Range</div>
<div class="t ts" style="left:717.5px;top:95px;font-size:10px;line-height:11px;transform:scaleX(0.900);">of</div>
<div class="t ts" style="left:717.5px;top:107px;font-size:10px;line-height:11px;transform:scaleX(1.050);">5.Dist.</div>
<div class="t ts" style="left:756.8px;top:83px;font-size:10px;line-height:11px;">Initial</div>
<div class="t ts" style="left:756.8px;top:95px;font-size:10px;line-height:11px;transform:scaleX(0.968);">Offset of</div>
<div class="t ts" style="left:756.8px;top:107px;font-size:10px;line-height:11px;transform:scaleX(1.055);">5.Dist</div>
<div class="sl" style="left:716px;top:120px;width:18px;height:144px"><div class="trk" style="left:3px;top:2px;width:10px;height:138px"></div><div class="kn" style="left:2px;top:123px;width:13px;height:8px"></div></div>
<div class="sl" style="left:756px;top:120px;width:18px;height:144px"><div class="trk" style="left:3px;top:2px;width:10px;height:138px"></div><div class="kn" style="left:2px;top:127px;width:13px;height:8px"></div></div>
<div class="bx" style="left:735px;top:120px;width:13px;height:13px"><div class="bc" style="left:2.0px;top:2.0px;width:7px;height:7px"></div></div>
<div class="bx" style="left:775px;top:120px;width:13px;height:13px"><div class="bc" style="left:2.0px;top:2.0px;width:7px;height:7px"></div></div>
<div class="bx" style="left:778px;top:250px;width:15px;height:14px"></div>
<div class="bx" style="left:716px;top:269px;width:38px;height:14px"><svg width="7" height="12" style="position:absolute;left:0;top:0"><path d="M0.5 0.5L5.5 6.0L0.5 11.5Z" fill="#aaa6aa" stroke="#222" stroke-width="0.9"/></svg><div class="t tn" style="left:8px;top:-0.5px;font-size:9px;line-height:12px;letter-spacing:0.25px;-webkit-text-stroke:0.4px #000;">1250.</div></div>
<div class="bx" style="left:756px;top:269px;width:35px;height:14px"><svg width="7" height="12" style="position:absolute;left:0;top:0"><path d="M0.5 0.5L5.5 6.0L0.5 11.5Z" fill="#aaa6aa" stroke="#222" stroke-width="0.9"/></svg><div class="t tn" style="left:8px;top:-0.5px;font-size:9px;line-height:12px;letter-spacing:0.25px;-webkit-text-stroke:0.4px #000;">742</div></div>
<div class="pb" style="left:719px;top:288px;width:59px;height:15px"><div class="t ts" style="left:6px;top:-0.5px;font-size:9px;line-height:12px;font-weight:bold;">fold</div><div style="left:40px;top:0;width:1px;height:12px;background:#bbb"></div><svg width="59" height="15" style="position:absolute;left:0;top:0"><path d="M46.0 5.0L48.5 2.5L51.0 5.0ZM46.0 7.0L48.5 9.5L51.0 7.0Z" fill="#000"/></svg></div>
<div class="sl" style="left:716px;top:309px;width:80px;height:12px"><div class="trk" style="left:3px;top:2px;width:72px;height:5px"></div><div class="kn" style="left:3px;top:1px;width:8px;height:8px"></div></div>
<div class="sl" style="left:716px;top:323px;width:80px;height:12px"><div class="trk" style="left:3px;top:2px;width:72px;height:5px"></div><div class="kn" style="left:37px;top:1px;width:8px;height:8px"></div></div>
<div class="t tn tk" style="left:719.0px;top:338px;font-size:9px;line-height:10px;letter-spacing:0.6px;">0.</div>
<div class="t tn tk" style="left:771.0px;top:338px;font-size:9px;line-height:10px;transform:scaleX(0.955);">2697.</div>
<div class="t ts" style="left:718.0px;top:363px;font-size:10px;line-height:11px;transform:scaleX(0.986);">Constant1</div>
<div class="t ts" style="left:747.0px;top:376px;font-size:10px;line-height:11px;transform:scaleX(0.986);">Constant2</div>
<div class="sl" style="left:717px;top:393px;width:18px;height:144px"><div class="trk" style="left:3px;top:2px;width:10px;height:138px"></div><div class="kn" style="left:2px;top:131px;width:13px;height:8px"></div></div>
<div class="sl" style="left:756px;top:393px;width:18px;height:144px"><div class="trk" style="left:3px;top:2px;width:10px;height:138px"></div><div class="kn" style="left:2px;top:23px;width:13px;height:8px"></div></div>
<div class="bx" style="left:736px;top:393px;width:13px;height:13px"><div class="bc" style="left:2.0px;top:2.0px;width:7px;height:7px"></div></div>
<div class="bx" style="left:775px;top:393px;width:13px;height:13px"><div class="bc" style="left:2.0px;top:2.0px;width:7px;height:7px"></div></div>
<div class="bx" style="left:717px;top:542px;width:38px;height:14px"><svg width="7" height="12" style="position:absolute;left:0;top:0"><path d="M0.5 0.5L5.5 6.0L0.5 11.5Z" fill="#aaa6aa" stroke="#222" stroke-width="0.9"/></svg><div class="t tn" style="left:8px;top:-0.5px;font-size:9px;line-height:12px;letter-spacing:0.25px;-webkit-text-stroke:0.4px #000;">0.</div></div>
<div class="bx" style="left:756px;top:542px;width:38px;height:14px"><svg width="7" height="12" style="position:absolute;left:0;top:0"><path d="M0.5 0.5L5.5 6.0L0.5 11.5Z" fill="#aaa6aa" stroke="#222" stroke-width="0.9"/></svg><div class="t tn" style="left:8px;top:-0.5px;font-size:9px;line-height:12px;letter-spacing:0.25px;-webkit-text-stroke:0.4px #000;">4256.</div></div>
<div class="t tn tk" style="left:844.0px;top:86px;font-size:9px;line-height:10px;">1</div>
<div class="t tn tk" style="left:859.5px;top:86px;font-size:9px;line-height:10px;">2</div>
<div class="t tn tk" style="left:874.0px;top:86px;font-size:9px;line-height:10px;">3</div>
<div class="t tn tk" style="left:889.0px;top:86px;font-size:9px;line-height:10px;">4</div>
<div class="t tn tk" style="left:905.5px;top:86px;font-size:9px;line-height:10px;">5</div>
<div class="t tn tk" style="left:921.5px;top:86px;font-size:9px;line-height:10px;">6</div>
<div class="t tn tk" style="left:938.5px;top:86px;font-size:9px;line-height:10px;">7</div>
<div class="t tn tk" style="left:953.0px;top:86px;font-size:9px;line-height:10px;">8</div>
<div class="t tn tk" style="left:969.5px;top:86px;font-size:9px;line-height:10px;">9</div>
<div class="t tn tk" style="left:985.5px;top:86px;font-size:9px;line-height:10px;">10</div>
<div class="t tn tk" style="left:1002.8px;top:86px;font-size:9px;line-height:10px;">11</div>
<svg width="178" height="130" style="position:absolute;left:838px;top:102px" shape-rendering="crispEdges"><rect x="0.5" y="0.5" width="177" height="129" fill="#E6E2EA" stroke="#000"/><path d="M9 0V130M25 0V130M41 0V130M57 0V130M73 0V130M89 0V130M105 0V130M121 0V130M137 0V130M153 0V130M169 0V130M0 9H178M0 25H178M0 41H178M0 57H178M0 73H178M0 89H178M0 105H178M0 121H178" stroke="#000" stroke-width="2" fill="none"/><g shape-rendering="auto"><circle cx="41" cy="25" r="4" fill="#F20000" stroke="#500" stroke-width="1"/><circle cx="73" cy="25" r="4" fill="#F20000" stroke="#500" stroke-width="1"/><circle cx="105" cy="25" r="4" fill="#F20000" stroke="#500" stroke-width="1"/><circle cx="153" cy="41" r="4" fill="#F20000" stroke="#500" stroke-width="1"/><circle cx="169" cy="41" r="4" fill="#F20000" stroke="#500" stroke-width="1"/><circle cx="57" cy="57" r="4" fill="#F20000" stroke="#500" stroke-width="1"/><circle cx="89" cy="57" r="4" fill="#F20000" stroke="#500" stroke-width="1"/><circle cx="121" cy="57" r="4" fill="#F20000" stroke="#500" stroke-width="1"/><circle cx="137" cy="73" r="4" fill="#F20000" stroke="#500" stroke-width="1"/><circle cx="9" cy="105" r="4" fill="#F20000" stroke="#500" stroke-width="1"/><circle cx="25" cy="105" r="4" fill="#F20000" stroke="#500" stroke-width="1"/></g></svg>
<div class="t ts" style="left:803.0px;top:105px;font-size:10px;line-height:11px;transform:scaleX(0.871);">1.Law</div>
<div class="t ts" style="left:803.0px;top:121px;font-size:10px;line-height:11px;transform:scaleX(0.871);">2.Law</div>
<div class="t ts" style="left:803.0px;top:137px;font-size:10px;line-height:11px;transform:scaleX(0.854);">Uniform</div>
<div class="t ts" style="left:803.0px;top:153px;font-size:10px;line-height:11px;transform:scaleX(0.859);">Gauss</div>
<div class="t ts" style="left:803.0px;top:169px;font-size:10px;line-height:11px;transform:scaleX(0.917);">Cauchy</div>
<div class="t ts" style="left:803.0px;top:185px;font-size:10px;line-height:11px;transform:scaleX(0.955);">Weibull</div>
<div class="t ts" style="left:803.0px;top:201px;font-size:10px;line-height:11px;transform:scaleX(0.934);">Constant</div>
<div class="t ts" style="left:803.0px;top:215px;font-size:10px;line-height:11px;transform:scaleX(0.946);">Logistic</div>
<div class="t ts" style="left:845.3px;top:236px;font-size:10px;line-height:11px;transform:scaleX(0.942);">1. Onset time interval for next event</div>
<div class="t ts" style="left:845.3px;top:250px;font-size:10px;line-height:11px;transform:scaleX(0.928);">2. Duration of Event</div>
<div class="t ts" style="left:845.3px;top:265px;font-size:10px;line-height:11px;transform:scaleX(0.896);">3. N/A</div>
<div class="t ts" style="left:916.0px;top:265px;font-size:10px;line-height:11px;transform:scaleX(0.904);">4. N/A</div>
<div class="t ts" style="left:845.3px;top:280px;font-size:10px;line-height:11px;transform:scaleX(0.909);">5. Line Generator1 Start offset</div>
<div class="t ts" style="left:845.3px;top:294px;font-size:10px;line-height:11px;transform:scaleX(0.917);">6. Line Generator1 Velocity</div>
<div class="t ts" style="left:845.3px;top:308px;font-size:10px;line-height:11px;transform:scaleX(0.909);">7. Line Generator2 Start offset</div>
<div class="t ts" style="left:845.3px;top:322px;font-size:10px;line-height:11px;transform:scaleX(0.949);">8. Linegenerator2 Velocity</div>
<div class="t ts" style="left:845.3px;top:336px;font-size:10px;line-height:11px;transform:scaleX(0.941);">9. Linegenerator3 Start offset</div>
<div class="t ts" style="left:844.0px;top:350px;font-size:10px;line-height:11px;transform:scaleX(0.937);">10 Linegenerator4 Start offset</div>
<div class="t ts" style="left:844.0px;top:364px;font-size:10px;line-height:11px;transform:scaleX(0.940);">11 Linegenerator5 Start offset</div>
<div class="t tn tk" style="left:868.5px;top:381px;font-size:9px;line-height:10px;">1</div>
<div class="t tn tk" style="left:884.1px;top:381px;font-size:9px;line-height:10px;">2</div>
<div class="t tn tk" style="left:899.1px;top:381px;font-size:9px;line-height:10px;">3</div>
<div class="t tn tk" style="left:915.0px;top:381px;font-size:9px;line-height:10px;">4</div>
<div class="t tn tk" style="left:930.9px;top:381px;font-size:9px;line-height:10px;">5</div>
<div class="t tn tk" style="left:946.9px;top:381px;font-size:9px;line-height:10px;">6</div>
<div class="t tn tk" style="left:961.9px;top:381px;font-size:9px;line-height:10px;">7</div>
<svg width="114" height="178" style="position:absolute;left:862px;top:396px" shape-rendering="crispEdges"><rect x="0.5" y="0.5" width="113" height="177" fill="#E6E2EA" stroke="#000"/><path d="M9 0V178M25 0V178M41 0V178M57 0V178M73 0V178M89 0V178M105 0V178M0 9H114M0 25H114M0 41H114M0 57H114M0 73H114M0 89H114M0 105H114M0 121H114M0 137H114M0 153H114M0 169H114" stroke="#000" stroke-width="2" fill="none"/><g shape-rendering="auto"><circle cx="73" cy="9" r="4" fill="#F20000" stroke="#500" stroke-width="1"/><circle cx="41" cy="41" r="4" fill="#F20000" stroke="#500" stroke-width="1"/><circle cx="105" cy="57" r="4" fill="#F20000" stroke="#500" stroke-width="1"/><circle cx="73" cy="73" r="4" fill="#F20000" stroke="#500" stroke-width="1"/><circle cx="89" cy="89" r="4" fill="#F20000" stroke="#500" stroke-width="1"/><circle cx="57" cy="105" r="4" fill="#F20000" stroke="#500" stroke-width="1"/><circle cx="41" cy="121" r="4" fill="#F20000" stroke="#500" stroke-width="1"/><circle cx="41" cy="137" r="4" fill="#F20000" stroke="#500" stroke-width="1"/><circle cx="105" cy="153" r="4" fill="#F20000" stroke="#500" stroke-width="1"/><circle cx="9" cy="169" r="4" fill="#F20000" stroke="#500" stroke-width="1"/></g></svg>
<div class="t ts" style="left:803.0px;top:401px;font-size:10px;line-height:11px;transform:scaleX(0.924);">Pos/PWM/Y</div>
<div class="t ts" style="left:804.6px;top:417px;font-size:10px;line-height:11px;transform:scaleX(0.882);">Waveform</div>
<div class="t ts" style="left:804.6px;top:432px;font-size:10px;line-height:11px;transform:scaleX(0.934);">WavPitch/X</div>
<div class="t ts" style="left:804.6px;top:448px;font-size:10px;line-height:11px;transform:scaleX(0.926);">CutoffFreq</div>
<div class="t ts" style="left:804.6px;top:463px;font-size:10px;line-height:11px;transform:scaleX(0.909);">FilterQ</div>
<div class="t ts" style="left:804.6px;top:479px;font-size:10px;line-height:11px;transform:scaleX(0.870);">WaveAmp</div>
<div class="t ts" style="left:804.6px;top:495px;font-size:10px;line-height:11px;transform:scaleX(0.946);">Panning</div>
<div class="t ts" style="left:804.6px;top:511px;font-size:10px;line-height:11px;transform:scaleX(0.898);">RM/FMWsho</div>
<div class="t ts" style="left:804.6px;top:527px;font-size:10px;line-height:11px;transform:scaleX(0.908);">CombDelay</div>
<div class="t ts" style="left:805.4px;top:543px;font-size:10px;line-height:11px;transform:scaleX(0.917);">WaveShp</div>
<div class="t ts" style="left:806.5px;top:559px;font-size:10px;line-height:11px;transform:scaleX(0.897);">FMratio</div>
<div class="t ts" style="left:828.4px;top:577px;font-size:10px;line-height:11px;transform:scaleX(0.884);">1. Line1 Generator</div>
<div class="t ts" style="left:828.4px;top:591px;font-size:10px;line-height:11px;transform:scaleX(0.884);">2. Line2 Generator</div>
<div class="t ts" style="left:828.4px;top:605px;font-size:10px;line-height:11px;transform:scaleX(0.884);">3. Line3 Generator</div>
<div class="t ts" style="left:828.4px;top:619px;font-size:10px;line-height:11px;transform:scaleX(0.884);">4. Line4 Generator</div>
<div class="t ts" style="left:918.4px;top:577px;font-size:10px;line-height:11px;transform:scaleX(0.938);">5. Constant1</div>
<div class="t ts" style="left:918.4px;top:591px;font-size:10px;line-height:11px;transform:scaleX(0.938);">6. Constant2</div>
<div class="t ts" style="left:918.4px;top:605px;font-size:10px;line-height:11px;transform:scaleX(0.884);">7. Line5 Generator</div>
<div class="bx" style="left:235px;top:347px;width:13px;height:13px"><div class="bc" style="left:2.0px;top:2.0px;width:7px;height:7px"></div></div>
<div class="bx" style="left:383px;top:347px;width:13px;height:13px"><div class="bc" style="left:2.0px;top:2.0px;width:7px;height:7px"></div></div>
<div class="cy" style="left:250px;top:347px;width:97px;height:182px;"></div>
<div class="cy" style="left:398px;top:347px;width:97px;height:182px;"></div>
<div class="bk" style="left:288px;top:348px;width:1px;height:33px;"></div>
<div class="bk" style="left:343px;top:381px;width:1px;height:74px;"></div>
<div class="bk" style="left:323px;top:455px;width:1px;height:7px;"></div>
<div class="bk" style="left:301px;top:462px;width:1px;height:53px;"></div>
<div class="bk" style="left:259px;top:515px;width:1px;height:13px;"></div>
<div class="bk" style="left:275px;top:523px;width:1px;height:1px;"></div>
<svg width="97" height="182" style="position:absolute;left:398px;top:347px" shape-rendering="crispEdges"><path d="M35.500 1L39.500 33M25.500 33L31.500 105M35.500 105V113M48.500 113L45.500 164M41.500 164L40.500 181M34.500 173V178" stroke="#000" stroke-width="1" fill="none"/></svg>
<div class="sl" style="left:250px;top:532px;width:97px;height:12px"><div class="trk" style="left:3px;top:2px;width:89px;height:5px"></div><div class="kn" style="left:3px;top:1px;width:8px;height:8px"></div></div>
<div class="sl" style="left:250px;top:545px;width:97px;height:12px"><div class="trk" style="left:3px;top:2px;width:89px;height:5px"></div><div class="kn" style="left:85px;top:1px;width:8px;height:8px"></div></div>
<div class="sl" style="left:398px;top:532px;width:97px;height:12px"><div class="trk" style="left:3px;top:2px;width:89px;height:5px"></div><div class="kn" style="left:2px;top:1px;width:8px;height:8px"></div></div>
<div class="sl" style="left:398px;top:545px;width:97px;height:12px"><div class="trk" style="left:3px;top:2px;width:89px;height:5px"></div><div class="kn" style="left:84px;top:1px;width:8px;height:8px"></div></div>
<div class="t tn tk" style="left:348.0px;top:533px;font-size:9px;line-height:10px;letter-spacing:0.6px;">0.</div>
<div class="t tn tk" style="left:377.0px;top:533px;font-size:9px;line-height:10px;letter-spacing:0.6px;">0.</div>
<div class="t tn tk" style="left:348.0px;top:548px;font-size:9px;line-height:10px;transform:scaleX(1.021);">5000.</div>
<div class="t tn tk" style="left:377.0px;top:548px;font-size:9px;line-height:10px;transform:scaleX(0.949);">4999</div>
<div class="t tn tk" style="left:40.0px;top:365px;font-size:9px;line-height:10px;transform:scaleX(1.126);">Select  Store</div>
<div class="pb" style="left:43px;top:379px;width:19px;height:15px"><div class="t tn" style="left:0;top:-0.5px;width:17px;text-align:center;font-size:9px;line-height:12px;letter-spacing:0px;-webkit-text-stroke:0.35px #000;">17</div></div>
<div class="bx" style="left:63px;top:379px;width:13px;height:13px"><div class="bc" style="left:2.0px;top:2.0px;width:7px;height:7px"></div></div>
<div class="pb" style="left:78px;top:379px;width:18px;height:15px"><div class="t tn" style="left:0;top:-0.5px;width:16px;text-align:center;font-size:9px;line-height:12px;letter-spacing:0px;-webkit-text-stroke:0.35px #000;">1</div></div>
<div class="bx" style="left:97px;top:379px;width:13px;height:13px"><div class="bc" style="left:2.0px;top:2.0px;width:7px;height:7px"></div></div>
<div class="bx" style="left:63px;top:395px;width:13px;height:13px"><div class="bc" style="left:2.0px;top:2.0px;width:7px;height:7px"></div></div>
<div class="t ts" style="left:79.5px;top:395px;font-size:10px;line-height:11px;font-weight:bold;transform:scaleX(0.834);">read TI file</div>
<div class="pb" style="left:78px;top:434px;width:48px;height:14px"><div class="t tn" style="left:6px;top:-0.5px;font-size:9px;line-height:11px;-webkit-text-stroke:0.35px #000;">512</div><div style="left:32px;top:0;width:1px;height:11px;background:#bbb"></div><svg width="48" height="14" style="position:absolute;left:0;top:0"><path d="M36.5 4.5L39.0 2.0L41.5 4.5ZM36.5 6.5L39.0 9.0L41.5 6.5Z" fill="#000"/></svg></div>
<div class="pb" style="left:78px;top:451px;width:48px;height:14px"><div class="t tn" style="left:6px;top:-0.5px;font-size:9px;line-height:11px;-webkit-text-stroke:0.35px #000;">64</div><div style="left:32px;top:0;width:1px;height:11px;background:#bbb"></div><svg width="48" height="14" style="position:absolute;left:0;top:0"><path d="M36.5 4.5L39.0 2.0L41.5 4.5ZM36.5 6.5L39.0 9.0L41.5 6.5Z" fill="#000"/></svg></div>
<div class="t ts" style="left:28.0px;top:469px;font-size:10px;line-height:11px;transform:scaleX(0.978);">Choose an audio driver</div>
<div class="pb" style="left:26px;top:483px;width:100px;height:16px"><div class="t ts" style="left:0;top:-0.5px;width:98px;text-align:center;font-size:10px;line-height:13px;letter-spacing:0.3px;">CoreAudio Digidesi...</div></div>
<div class="t ts" style="left:160.5px;top:469px;font-size:10px;line-height:11px;transform:scaleX(1.010);">CascFilter</div>
<div class="bx" style="left:204px;top:468px;width:13px;height:13px"></div>
<div class="pb" style="left:175px;top:483px;width:45px;height:14px"><div class="t ts" style="left:0;top:-0.5px;width:43px;text-align:center;font-size:9px;line-height:11px;letter-spacing:0px;font-weight:bold;">bandpass</div></div>
<div class="pb" style="left:175px;top:499px;width:45px;height:14px"><div class="t ts" style="left:0;top:-0.5px;width:43px;text-align:center;font-size:9px;line-height:11px;letter-spacing:0px;font-weight:bold;">lowpass</div></div>
<div class="pb" style="left:58px;top:531px;width:36px;height:14px"><div class="t tn" style="left:0;top:-0.5px;width:34px;text-align:center;font-size:9px;line-height:11px;letter-spacing:0px;-webkit-text-stroke:0.35px #000;">44100</div></div>
<div class="t ts" style="left:61.0px;top:550px;font-size:10px;line-height:11px;transform:scaleX(0.953);">Disk</div>
<div class="bx" style="left:81px;top:548px;width:13px;height:13px"></div>
<div class="t ts" style="left:111.0px;top:548px;font-size:9px;line-height:10px;font-weight:bold;transform:scaleX(0.958);">tuning map</div>
<div class="bx" style="left:155px;top:548px;width:13px;height:13px"><div class="bc" style="left:2.0px;top:2.0px;width:7px;height:7px"></div></div>
<div class="t ts" style="left:180.0px;top:534px;font-size:10px;line-height:11px;transform:scaleX(0.971);">Voices</div>
<div class="pb" style="left:177px;top:546px;width:43px;height:16px"><div class="t tn" style="left:6px;top:-0.5px;font-size:10px;line-height:13px;-webkit-text-stroke:0.35px #000;">5</div><div style="left:23px;top:0;width:1px;height:13px;background:#bbb"></div><svg width="43" height="16" style="position:absolute;left:0;top:0"><path d="M29.5 5.5L32.0 3.0L34.5 5.5ZM29.5 7.5L32.0 10.0L34.5 7.5Z" fill="#000"/></svg></div>
<div class="t tn tk" style="left:224.0px;top:550px;font-size:9px;line-height:10px;">2</div>
<div class="bx" style="left:177px;top:565px;width:13px;height:13px"><svg width="11" height="11" style="position:absolute;left:0;top:0"><path d="M1.5 1.5L9.5 9.5M9.5 1.5L1.5 9.5" stroke="#000" stroke-width="1" fill="none"/></svg></div>
<div class="t ts" style="left:192.0px;top:566px;font-size:10px;line-height:11px;transform:scaleX(1.009);">V Steal</div>
<div class="bx" style="left:177px;top:580px;width:13px;height:13px"><svg width="11" height="11" style="position:absolute;left:0;top:0"><path d="M1.5 1.5L9.5 9.5M9.5 1.5L1.5 9.5" stroke="#000" stroke-width="1" fill="none"/></svg></div>
<div class="t ts" style="left:194.0px;top:581px;font-size:10px;line-height:11px;transform:scaleX(1.005);">Swing</div>
<div class="bx" style="left:23px;top:585px;width:20px;height:20px"><svg width="18" height="18" style="position:absolute;left:0;top:0"><path d="M1.5 1.5L16.5 16.5M16.5 1.5L1.5 16.5" stroke="#000" stroke-width="1" fill="none"/></svg></div>
<div class="t ts" style="left:47.8px;top:584px;font-size:19px;line-height:21px;font-weight:bold;transform:scaleX(0.930);">on/off</div>
<div class="bx" style="left:23px;top:608px;width:20px;height:20px"><svg width="18" height="18" style="position:absolute;left:0;top:0"><path d="M1.5 1.5L16.5 16.5M16.5 1.5L1.5 16.5" stroke="#000" stroke-width="1" fill="none"/></svg></div>
<div class="t ts" style="left:47.8px;top:608px;font-size:19px;line-height:21px;font-weight:bold;transform:scaleX(0.828);">dac</div>
<div class="t ts" style="left:106.0px;top:610px;font-size:10px;line-height:11px;transform:scaleX(0.933);">Calc   223.1 ksec</div>
<div class="t ts" style="left:206.5px;top:611px;font-size:9px;line-height:10px;font-weight:bold;transform:scaleX(0.943);">CPU Usage % 47</div>
<div class="sl" style="left:384px;top:610px;width:74px;height:12px"><div class="trk" style="left:3px;top:2px;width:66px;height:5px"></div><div class="kn" style="left:3px;top:1px;width:8px;height:8px"></div></div>
<div class="t ts" style="left:460.8px;top:610px;font-size:10px;line-height:11px;transform:scaleX(0.936);">seed value</div>
<div class="t ts" style="left:17.0px;top:639px;font-size:10px;line-height:11px;transform:scaleX(0.954);">Wavetables</div>
<div class="pb" style="left:62px;top:637px;width:57px;height:15px"><div class="t ts" style="left:0;top:-0.5px;width:55px;text-align:center;font-size:10px;line-height:12px;letter-spacing:0.2px;">JAHF.aif</div></div>
<div class="bx" style="left:121px;top:637px;width:13px;height:13px"><div class="bc" style="left:2.0px;top:2.0px;width:7px;height:7px"></div></div>
<div class="pb" style="left:62px;top:655px;width:57px;height:16px"><div class="t ts" style="left:0;top:-0.5px;width:55px;text-align:center;font-size:10px;line-height:13px;letter-spacing:0.5px;">CL LGF...</div></div>
<div class="pb" style="left:62px;top:674px;width:57px;height:16px"><div class="t ts" style="left:0;top:-0.5px;width:55px;text-align:center;font-size:10px;line-height:13px;letter-spacing:0.5px;">CL LGF...</div></div>
<div class="pb" style="left:62px;top:693px;width:57px;height:16px"><div class="t ts" style="left:0;top:-0.5px;width:55px;text-align:center;font-size:10px;line-height:13px;letter-spacing:0.5px;">CL LGF...</div></div>
<div class="t ts" style="left:46.0px;top:695px;font-size:10px;line-height:11px;transform:scaleX(0.783);">WS</div>
<div class="t ts" style="left:25.0px;top:715px;font-size:9px;line-height:10px;font-weight:bold;transform:scaleX(0.926);">LoopSW</div>
<div class="bx" style="left:63px;top:714px;width:15px;height:14px"><svg width="13" height="12" style="position:absolute;left:0;top:0"><path d="M1.5 1.5L11.5 10.5M11.5 1.5L1.5 10.5" stroke="#000" stroke-width="1" fill="none"/></svg></div>
<div class="bx" style="left:17px;top:740px;width:13px;height:13px"></div>
<div class="t ts" style="left:33.0px;top:738px;font-size:10px;line-height:11px;transform:scaleX(0.919);">LiveIn</div>
<div style="left:62px;top:738px;width:60px;height:12px;background:#0c140f"></div>
<div class="pb" style="left:149px;top:641px;width:39px;height:15px"><div class="t ts" style="left:0;top:-0.5px;width:37px;text-align:center;font-size:9px;line-height:12px;letter-spacing:0px;font-weight:bold;">Sample</div></div>
<div class="sl" style="left:149px;top:659px;width:39px;height:10px"><div style="left:3px;top:3px;width:31px;height:2px;background:#9a969a"></div><div class="kn" style="left:7px;top:1px;width:7px;height:6px"></div></div>
<div class="sl" style="left:149px;top:671px;width:39px;height:10px"><div style="left:3px;top:3px;width:31px;height:2px;background:#9a969a"></div><div class="kn" style="left:16px;top:1px;width:7px;height:6px"></div></div>
<div class="pb" style="left:149px;top:684px;width:39px;height:15px"><div class="t ts" style="left:0;top:-0.5px;width:37px;text-align:center;font-size:9px;line-height:12px;letter-spacing:0px;font-weight:bold;">forward</div></div>
<div class="t ts" style="left:141.0px;top:711px;font-size:10px;line-height:11px;transform:scaleX(0.865);">FM</div>
<div class="bx" style="left:156px;top:710px;width:13px;height:13px"></div>
<div class="t ts" style="left:141.0px;top:724px;font-size:10px;line-height:11px;transform:scaleX(0.833);">WS</div>
<div class="bx" style="left:156px;top:724px;width:13px;height:13px"></div>
<div class="t ts" style="left:141.0px;top:738px;font-size:10px;line-height:11px;transform:scaleX(0.803);">RM</div>
<div class="bx" style="left:156px;top:738px;width:13px;height:13px"></div>
<div class="sl" style="left:196px;top:640px;width:15px;height:88px"><div class="trk" style="left:3px;top:2px;width:7px;height:82px"></div><div class="kn" style="left:2px;top:75px;width:10px;height:8px"></div></div>
<div class="sl" style="left:235px;top:640px;width:15px;height:88px"><div class="trk" style="left:3px;top:2px;width:7px;height:82px"></div><div class="kn" style="left:2px;top:72px;width:10px;height:8px"></div></div>
<div class="bx" style="left:181px;top:715px;width:13px;height:13px"><div class="bc" style="left:2.0px;top:2.0px;width:7px;height:7px"></div></div>
<div class="bx" style="left:220px;top:715px;width:13px;height:13px"><div class="bc" style="left:2.0px;top:2.0px;width:7px;height:7px"></div></div>
<div class="bx" style="left:176px;top:730px;width:35px;height:13px"><svg width="7" height="11" style="position:absolute;left:0;top:0"><path d="M0.5 0.5L5.5 5.5L0.5 10.5Z" fill="#aaa6aa" stroke="#222" stroke-width="0.9"/></svg><div class="t tn" style="left:8px;top:-0.5px;font-size:9px;line-height:11px;letter-spacing:0.25px;-webkit-text-stroke:0.4px #000;">0</div></div>
<div class="bx" style="left:215px;top:730px;width:35px;height:13px"><svg width="7" height="11" style="position:absolute;left:0;top:0"><path d="M0.5 0.5L5.5 5.5L0.5 10.5Z" fill="#aaa6aa" stroke="#222" stroke-width="0.9"/></svg><div class="t tn" style="left:8px;top:-0.5px;font-size:9px;line-height:11px;letter-spacing:0.25px;-webkit-text-stroke:0.4px #000;">973</div></div>
<div class="t ts" style="left:183.0px;top:743px;font-size:10px;line-height:11px;transform:scaleX(0.920);">PStart</div>
<div class="t ts" style="left:222.0px;top:743px;font-size:10px;line-height:11px;transform:scaleX(0.910);">PStop</div>
<div class="ra" style="left:269.0px;top:643.0px;width:12px;height:12px"></div>
<div class="ra" style="left:387.0px;top:643.0px;width:12px;height:12px"><div class="rd"></div></div>
<div class="ra" style="left:269.0px;top:657.0px;width:12px;height:12px"></div>
<div class="ra" style="left:387.0px;top:657.0px;width:12px;height:12px"></div>
<div class="ra" style="left:269.0px;top:671.0px;width:12px;height:12px"></div>
<div class="ra" style="left:387.0px;top:671.0px;width:12px;height:12px"></div>
<div class="ra" style="left:269.0px;top:685.0px;width:12px;height:12px"><div class="rd"></div></div>
<div class="ra" style="left:387.0px;top:685.0px;width:12px;height:12px"></div>
<div class="ra" style="left:269.0px;top:699.0px;width:12px;height:12px"></div>
<div class="ra" style="left:387.0px;top:699.0px;width:12px;height:12px"></div>
<div class="ra" style="left:269.0px;top:713.0px;width:12px;height:12px"></div>
<div class="ra" style="left:387.0px;top:713.0px;width:12px;height:12px"></div>
<div class="pb" style="left:285px;top:638px;width:57px;height:16px"><div class="t ts" style="left:0;top:-0.5px;width:55px;text-align:center;font-size:10px;line-height:13px;letter-spacing:0.5px;">CL LGF...</div></div>
<div class="bx" style="left:343px;top:639px;width:13px;height:13px"></div>
<div class="sl" style="left:285px;top:657px;width:73px;height:12px"><div class="trk" style="left:3px;top:2px;width:65px;height:5px"></div><div class="kn" style="left:3px;top:1px;width:8px;height:8px"></div></div>
<div class="t ts" style="left:358.8px;top:658px;font-size:9px;line-height:10px;font-weight:bold;transform:scaleX(0.956);">Speed</div>
<div class="sl" style="left:285px;top:672px;width:73px;height:12px"><div class="trk" style="left:3px;top:2px;width:65px;height:5px"></div><div class="kn" style="left:3px;top:1px;width:8px;height:8px"></div></div>
<div class="t ts" style="left:358.8px;top:673px;font-size:9px;line-height:10px;font-weight:bold;">Level</div>
<div class="sl" style="left:285px;top:686px;width:73px;height:12px"><div class="trk" style="left:3px;top:2px;width:65px;height:5px"></div><div class="kn" style="left:3px;top:1px;width:8px;height:8px"></div></div>
<div class="t ts" style="left:358.8px;top:687px;font-size:9px;line-height:10px;font-weight:bold;transform:scaleX(0.931);">IMode</div>
<div class="t ts" style="left:287.0px;top:701px;font-size:9px;line-height:10px;font-weight:bold;transform:scaleX(0.953);">off</div>
<div class="t ts" style="left:312.5px;top:701px;font-size:9px;line-height:10px;font-weight:bold;transform:scaleX(0.951);">samp</div>
<div class="t ts" style="left:342.5px;top:701px;font-size:9px;line-height:10px;font-weight:bold;transform:scaleX(0.815);">adc</div>
<div class="t ts" style="left:302.5px;top:734px;font-size:14px;line-height:15px;transform:scaleX(0.960);">CrossMod</div>
<div class="bx" style="left:266px;top:739px;width:13px;height:13px"><div class="bc" style="left:2.0px;top:2.0px;width:7px;height:7px"></div></div>
<div class="bx" style="left:389px;top:739px;width:13px;height:13px"><div class="bc" style="left:2.0px;top:2.0px;width:7px;height:7px"></div></div>
<div class="bx" style="left:410px;top:639px;width:13px;height:13px"></div>
<div class="t ts" style="left:428.0px;top:638px;font-size:14px;line-height:15px;transform:scaleX(0.965);">2Dwave</div>
<div class="bx" style="left:410px;top:659px;width:13px;height:12px"></div>
<div class="t ts" style="left:427.0px;top:660px;font-size:9px;line-height:10px;font-weight:bold;transform:scaleX(1.029);">sync</div>
<div class="pb" style="left:409px;top:677px;width:39px;height:15px"><div class="t tn" style="left:6px;top:-0.5px;font-size:9px;line-height:12px;-webkit-text-stroke:0.35px #000;">1</div><div style="left:20px;top:0;width:1px;height:12px;background:#bbb"></div><svg width="39" height="15" style="position:absolute;left:0;top:0"><path d="M26.0 5.0L28.5 2.5L31.0 5.0ZM26.0 7.0L28.5 9.5L31.0 7.0Z" fill="#000"/></svg></div>
<div class="t ts" style="left:451.0px;top:679px;font-size:9px;line-height:10px;font-weight:bold;transform:scaleX(1.047);">splice</div>
<div class="bx" style="left:484px;top:638px;width:13px;height:13px"></div>
<div class="t ts" style="left:482.5px;top:687px;font-size:12px;line-height:14px;font-weight:bold;transform:scaleX(0.943);">OscBank</div>
<div class="sl" style="left:532px;top:640px;width:15px;height:88px"><div class="trk" style="left:3px;top:2px;width:7px;height:82px"></div><div class="kn" style="left:2px;top:30px;width:10px;height:8px"></div></div>
<div class="sl" style="left:564px;top:640px;width:15px;height:88px"><div class="trk" style="left:3px;top:2px;width:7px;height:82px"></div><div class="kn" style="left:2px;top:59px;width:10px;height:8px"></div></div>
<div class="sl" style="left:601px;top:640px;width:15px;height:88px"><div class="trk" style="left:3px;top:2px;width:7px;height:82px"></div><div class="kn" style="left:2px;top:75px;width:10px;height:8px"></div></div>
<div class="bx" style="left:550px;top:715px;width:13px;height:13px"><svg width="11" height="11" style="position:absolute;left:0;top:0"><path d="M1.5 1.5L9.5 9.5M9.5 1.5L1.5 9.5" stroke="#000" stroke-width="1" fill="none"/></svg></div>
<div class="bx" style="left:516px;top:729px;width:32px;height:13px"><svg width="7" height="11" style="position:absolute;left:0;top:0"><path d="M0.5 0.5L5.5 5.5L0.5 10.5Z" fill="#aaa6aa" stroke="#222" stroke-width="0.9"/></svg><div class="t tn" style="left:8px;top:-0.5px;font-size:9px;line-height:11px;letter-spacing:0.25px;-webkit-text-stroke:0.4px #000;">162</div></div>
<div class="bx" style="left:550px;top:729px;width:29px;height:13px"><svg width="7" height="11" style="position:absolute;left:0;top:0"><path d="M0.5 0.5L5.5 5.5L0.5 10.5Z" fill="#aaa6aa" stroke="#222" stroke-width="0.9"/></svg><div class="t tn" style="left:8px;top:-0.5px;font-size:9px;line-height:11px;letter-spacing:0.25px;-webkit-text-stroke:0.4px #000;">2.2</div></div>
<div class="bx" style="left:581px;top:729px;width:36px;height:13px"><svg width="7" height="11" style="position:absolute;left:0;top:0"><path d="M0.5 0.5L5.5 5.5L0.5 10.5Z" fill="#aaa6aa" stroke="#222" stroke-width="0.9"/></svg><div class="t tn" style="left:8px;top:-0.5px;font-size:9px;line-height:11px;letter-spacing:0.25px;-webkit-text-stroke:0.4px #000;">0</div></div>
<div class="t ts" style="left:516.0px;top:743px;font-size:10px;line-height:11px;transform:scaleX(0.800);">Num</div>
<div class="t ts" style="left:552.5px;top:743px;font-size:10px;line-height:11px;transform:scaleX(0.950);">ScanF</div>
<div class="t ts" style="left:589.0px;top:743px;font-size:10px;line-height:11px;transform:scaleX(0.887);">Offset</div>
<div class="bx" style="left:630px;top:656px;width:14px;height:13px"></div>
<div class="bx" style="left:645px;top:656px;width:27px;height:13px"><svg width="7" height="11" style="position:absolute;left:0;top:0"><path d="M0.5 0.5L5.5 5.5L0.5 10.5Z" fill="#aaa6aa" stroke="#222" stroke-width="0.9"/></svg><div class="t tn" style="left:8px;top:-0.5px;font-size:9px;line-height:11px;letter-spacing:0.25px;-webkit-text-stroke:0.4px #000;">1.</div></div>
<div class="bx" style="left:673px;top:656px;width:27px;height:13px"><svg width="7" height="11" style="position:absolute;left:0;top:0"><path d="M0.5 0.5L5.5 5.5L0.5 10.5Z" fill="#aaa6aa" stroke="#222" stroke-width="0.9"/></svg><div class="t tn" style="left:8px;top:-0.5px;font-size:9px;line-height:11px;letter-spacing:0.25px;-webkit-text-stroke:0.4px #000;">1.</div></div>
<div class="bx" style="left:701px;top:656px;width:30px;height:13px"><svg width="7" height="11" style="position:absolute;left:0;top:0"><path d="M0.5 0.5L5.5 5.5L0.5 10.5Z" fill="#aaa6aa" stroke="#222" stroke-width="0.9"/></svg><div class="t tn" style="left:8px;top:-0.5px;font-size:9px;line-height:11px;letter-spacing:0.25px;-webkit-text-stroke:0.4px #000;">0.94</div></div>
<div class="t ts" style="left:645.0px;top:672px;font-size:9px;line-height:10px;font-weight:bold;transform:scaleX(0.963);">DIgain DIgain FeedB</div>
<div class="t ts" style="left:666.0px;top:735px;font-size:14px;line-height:15px;">CombFilter</div>
<div class="t tn tk" style="left:927.8px;top:697px;font-size:9px;line-height:10px;letter-spacing:0.5px;">Design&amp;</div>
<div class="t tn tk" style="left:927.8px;top:709px;font-size:9px;line-height:10px;letter-spacing:0.5px;">programming by</div>
<div class="t tn tk" style="left:927.8px;top:721px;font-size:9px;line-height:10px;letter-spacing:0.5px;">Sinan Bokesoy in</div>
<div class="t tn tk" style="left:927.8px;top:733px;font-size:9px;line-height:10px;letter-spacing:0.5px;">collaboration with</div>
<div class="t tn tk" style="left:927.8px;top:745px;font-size:9px;line-height:10px;letter-spacing:0.5px;">Gerard Pape</div>
<svg width="16" height="18" style="position:absolute;left:703px;top:320px"><path d="M3.500 9.500L1.500 6.500L2.500 5.500L5.500 8V2.500L7 2L8 6V1.500L9.500 1L10.500 6V2L12 2L12.500 7V4L14 4.500V11L12 16.500H6Z" fill="#fff" stroke="#000" stroke-width="1" stroke-linejoin="round"/></svg>
<div style="left:64px;top:780px;width:650px;height:160px;background:#fff;border-radius:6px 6px 0 0;box-shadow:0 3px 8px rgba(0,0,0,0.55);overflow:hidden"><div class="pin" style="left:0;top:0;width:650px;height:22px;border-bottom:1px solid #a4a4a4"></div><div style="left:0;top:22px;width:650px;height:17px;background:#E8E8EE"></div><div class="bk" style="left:0;top:39px;width:635px;height:1px"></div><div style="left:0;top:145px;width:650px;height:15px;background:linear-gradient(180deg,#d4d4d4,#f0f0f0 35%,#fff 60%,#e8e8e8);border-top:1px solid #c8c8c8"></div><div style="left:635px;top:21px;width:15px;height:124px;background:linear-gradient(90deg,#d4d4d4,#f4f4f4 35%,#fff 60%,#e0e0e0);border-left:1px solid #b8b8b8"></div><div style="left:636px;top:26px;width:13px;height:62px;border-radius:7px 7px 0 0;border:1px solid #aaa;border-bottom:none;background:linear-gradient(90deg,#e0e0e4,#fff 40%,#f0f0f4 70%,#d4d4d8)"></div><div style="left:636px;top:92px;width:13px;height:21px;border-radius:6.500px;border:1px solid #888;background:linear-gradient(90deg,#e0e0e4,#fff 40%,#f0f0f4 70%,#d0d0d4)"></div></div>
<svg width="648" height="19" style="position:absolute;left:65px;top:781px"><rect width="648" height="19" fill="url(#dw)"/></svg>
<svg width="634" height="17" style="position:absolute;left:65px;top:802px"><rect width="634" height="17" fill="url(#dw)"/></svg>
<div class="wb" style="left:72.25px;top:784.5px;width:13px;height:13px;"></div>
<div class="wb" style="left:93.5px;top:784.5px;width:13px;height:13px;"></div>
<div class="wb" style="left:114.5px;top:784.5px;width:13px;height:13px;"></div>
<div class="t tn" style="left:375.0px;top:784px;font-size:13px;line-height:15px;color:#808080;transform:scaleX(1.099);">Max</div>
<div class="t tn tk" style="left:68.0px;top:805px;font-size:10px;line-height:11px;transform:scaleX(1.072);">© 1990-2004 Cycling '74 / IRCAM</div>
<div style="left:68px;top:824px;width:6px;height:6px;border-radius:50%;background:#000"></div>
<div class="t tn tk" style="left:77.0px;top:823px;font-size:9px;line-height:10px;transform:scaleX(1.185);">error: -: doesn't understand "signal"</div>
<div style="left:68px;top:836px;width:6px;height:6px;border-radius:50%;background:#000"></div>
<div class="t tn tk" style="left:77.0px;top:835px;font-size:9px;line-height:10px;transform:scaleX(1.185);">error: -: doesn't understand "signal"</div>
<div style="left:68px;top:848px;width:6px;height:6px;border-radius:50%;background:#000"></div>
<div class="t tn tk" style="left:77.0px;top:847px;font-size:9px;line-height:10px;transform:scaleX(1.185);">error: -: doesn't understand "signal"</div>
<div class="t tn tk" style="left:68.0px;top:859px;font-size:9px;line-height:10px;transform:scaleX(1.139);">freeing zero signal?</div>
<div style="left:68px;top:872px;width:6px;height:6px;border-radius:50%;background:#000"></div>
<div class="t tn tk" style="left:77.0px;top:871px;font-size:9px;line-height:10px;transform:scaleX(1.185);">error: -: doesn't understand "signal"</div>
<div style="left:68px;top:884px;width:6px;height:6px;border-radius:50%;background:#000"></div>
<div class="t tn tk" style="left:77.0px;top:883px;font-size:9px;line-height:10px;transform:scaleX(1.185);">error: -: doesn't understand "signal"</div>
<div style="left:68px;top:896px;width:6px;height:6px;border-radius:50%;background:#000"></div>
<div class="t tn tk" style="left:77.0px;top:895px;font-size:9px;line-height:10px;transform:scaleX(1.185);">error: -: doesn't understand "signal"</div>
<div style="left:68px;top:908px;width:6px;height:6px;border-radius:50%;background:#000"></div>
<div class="t tn tk" style="left:77.0px;top:907px;font-size:9px;line-height:10px;transform:scaleX(1.185);">error: -: doesn't understand "signal"</div>
<svg width="15" height="55" style="position:absolute;left:699px;top:885px"><path d="M7.500 13L11 20H4ZM7.500 36L11 29H4Z" fill="#999"/><path d="M3 54L14 43M7 54L14 47M11 54L14 51" stroke="#888"/></svg>
<div style="left:1053px;top:327px;width:212px;height:577px;border-radius:9px 9px 5px 5px;box-shadow:0 4px 9px rgba(0,0,0,0.6);border:1px solid #8a8a8a;background:linear-gradient(90deg,rgba(0,0,0,0.10),rgba(255,255,255,0.10) 8%,rgba(255,255,255,0.12) 50%,rgba(0,0,0,0.0) 92%,rgba(0,0,0,0.12)),repeating-linear-gradient(180deg,#C3C3C3 0,#C3C3C3 1px,#BBBBBB 1px,#BBBBBB 2px)"></div>
<div style="left:1061px;top:332px;width:14px;height:14px;border-radius:50%;border:1px solid #8a8a8a;background:radial-gradient(circle at 50% 70%,#f4f4f4 0%,#d0d0d0 50%,#a8a8a8 100%)"></div>
<div style="left:1082px;top:332px;width:14px;height:14px;border-radius:50%;border:1px solid #8a8a8a;background:radial-gradient(circle at 50% 70%,#f4f4f4 0%,#d0d0d0 50%,#a8a8a8 100%)"></div>
<div style="left:1103px;top:332px;width:14px;height:14px;border-radius:50%;border:1px solid #8a8a8a;background:radial-gradient(circle at 50% 70%,#f4f4f4 0%,#d0d0d0 50%,#a8a8a8 100%)"></div>
<svg width="16" height="15" style="position:absolute;left:1121px;top:331px"><path d="M1 3.500H6L7.500 2H14.500V13.500H1Z" fill="#e8ecf4" stroke="#aab" stroke-width="0.800"/><path d="M1.500 5.500H14.500V13.500H1.500Z" fill="#b4d0f0"/></svg>
<div class="t tn" style="left:1140.7px;top:331px;font-size:13px;line-height:15px;color:#5a5a5a;transform:scaleX(1.054);">Documents</div>
<div style="left:1237px;top:335px;width:20px;height:10px;border-radius:5px;border:1px solid #777;background:linear-gradient(#c8c8c8,#eee)"></div>
<div style="left:1070px;top:357px;width:52px;height:23px;border-radius:5px;border:1px solid #777;background:linear-gradient(180deg,#f4f4f4,#dcdcdc 50%,#cfcfcf 51%,#e4e4e4)"></div>
<div style="left:1095px;top:358px;width:1px;height:21px;background:#bbb"></div>
<svg width="52" height="23" style="position:absolute;left:1070px;top:357px"><path d="M9 11.500L17 7V16ZM42 11.500L34 7V16Z" fill="#9a9a9a"/></svg>
<div style="left:1131px;top:357px;width:77px;height:23px;border-radius:5px;border:1px solid #777;background:linear-gradient(180deg,#f4f4f4,#dcdcdc 50%,#cfcfcf 51%,#e4e4e4)"></div>
<div style="left:1157px;top:358px;width:25px;height:21px;background:linear-gradient(180deg,#d8d8d8,#c4c4c4 50%,#b8b8b8 51%,#d0d0d0);border-left:1px solid #999;border-right:1px solid #999"></div>
<svg width="77" height="23" style="position:absolute;left:1131px;top:357px" shape-rendering="crispEdges"><path d="M9.500 6.500h4v4h-4zM15.500 6.500h4v4h-4zM9.500 12.500h4v4h-4zM15.500 12.500h4v4h-4z" fill="none" stroke="#222" stroke-width="1"/><path d="M33 7.500H45M33 10.500H45M33 13.500H45M33 16.500H45" stroke="#222" stroke-width="1"/><path d="M58.500 6.500h12v10h-12zM62.500 6.500v10M66.500 6.500v10" fill="none" stroke="#222" stroke-width="1"/></svg>
<div class="t tn" style="left:1245.0px;top:358px;font-size:18px;line-height:20px;color:#444;font-weight:bold;transform:scaleX(1.249);">»</div>
<div style="left:1064px;top:390px;width:195px;height:491px;background:#fff;border:1px solid #999;border-bottom:none;border-right:none"></div>
<div style="left:1064px;top:390px;width:195px;height:16px;background:linear-gradient(180deg,#fff,#f0f0f0 50%,#e6e6e6 51%,#f6f6f6);border-bottom:1px solid #b4b4a8"></div>
<div class="t tn" style="left:1118.0px;top:392px;font-size:11px;line-height:12px;color:#777;transform:scaleX(1.005);">Name</div>
<div style="left:1244px;top:406px;width:15px;height:460px;background:linear-gradient(90deg,#dadada,#f6f6f6 35%,#fff 60%,#e6e6e6);border-left:1px solid #ccc"></div>
<div style="left:1064px;top:866px;width:180px;height:15px;background:linear-gradient(180deg,#d2d2d2,#f2f2f2 35%,#fff 60%,#e4e4e4);border-top:1px solid #bbb"></div>
<div style="left:1069px;top:868px;width:42px;height:12px;border-radius:6px;border:1px solid #888;background:linear-gradient(180deg,#e4e4e8,#fff 40%,#f0f0f4 70%,#d4d4d8)"></div>
<div style="left:1111px;top:868px;width:102px;height:12px;border-radius:0 6px 6px 0;border:1px solid #bbb;border-left:none;background:linear-gradient(180deg,#e0e0e0,#fafafa 40%,#fff 60%,#e8e8e8)"></div>
<svg width="32" height="14" style="position:absolute;left:1213px;top:867px"><path d="M5 7L11 4V10ZM27 7L21 4V10Z" fill="#999"/><path d="M16.500 1V13" stroke="#ccc"/></svg>
<svg width="12.500" height="16" viewBox="0 0 13 17" preserveAspectRatio="none" style="position:absolute;left:1098px;top:406px"><path d="M0.500 0.500H9L12.500 4V16.500H0.500Z" fill="#f4f4f4" stroke="#888" stroke-width="1"/><path d="M9 0.500V4H12.500" fill="#ddd" stroke="#888" stroke-width="0.800"/><circle cx="6" cy="6.500" r="3.200" fill="#3a58b8"/><path d="M3.500 8.500L8.500 4.500" stroke="#e44" stroke-width="1.200"/><rect x="3.500" y="12" width="6" height="2" fill="#999"/></svg>
<div class="t tn" style="left:1118.0px;top:407px;font-size:13px;line-height:15px;transform:scaleX(1.052);">sc029.tiff</div>
<svg width="12.500" height="16" viewBox="0 0 13 17" preserveAspectRatio="none" style="position:absolute;left:1098px;top:424px"><path d="M0.500 0.500H9L12.500 4V16.500H0.500Z" fill="#f4f4f4" stroke="#888" stroke-width="1"/><path d="M9 0.500V4H12.500" fill="#ddd" stroke="#888" stroke-width="0.800"/><circle cx="6" cy="6.500" r="3.200" fill="#3a58b8"/><path d="M3.500 8.500L8.500 4.500" stroke="#e44" stroke-width="1.200"/><rect x="3.500" y="12" width="6" height="2" fill="#999"/></svg>
<div class="t tn" style="left:1118.0px;top:425px;font-size:13px;line-height:15px;transform:scaleX(1.052);">sc030.tiff</div>
<svg width="12.500" height="16" viewBox="0 0 13 17" preserveAspectRatio="none" style="position:absolute;left:1098px;top:442px"><path d="M0.500 0.500H9L12.500 4V16.500H0.500Z" fill="#f4f4f4" stroke="#888" stroke-width="1"/><path d="M9 0.500V4H12.500" fill="#ddd" stroke="#888" stroke-width="0.800"/><circle cx="6" cy="6.500" r="3.200" fill="#3a58b8"/><path d="M3.500 8.500L8.500 4.500" stroke="#e44" stroke-width="1.200"/><rect x="3.500" y="12" width="6" height="2" fill="#999"/></svg>
<div class="t tn" style="left:1118.0px;top:443px;font-size:13px;line-height:15px;transform:scaleX(1.052);">sc031.tiff</div>
<svg width="12.500" height="16" viewBox="0 0 13 17" preserveAspectRatio="none" style="position:absolute;left:1098px;top:460px"><path d="M0.500 0.500H9L12.500 4V16.500H0.500Z" fill="#f4f4f4" stroke="#888" stroke-width="1"/><path d="M9 0.500V4H12.500" fill="#ddd" stroke="#888" stroke-width="0.800"/><circle cx="6" cy="6.500" r="3.200" fill="#3a58b8"/><path d="M3.500 8.500L8.500 4.500" stroke="#e44" stroke-width="1.200"/><rect x="3.500" y="12" width="6" height="2" fill="#999"/></svg>
<div class="t tn" style="left:1118.0px;top:461px;font-size:13px;line-height:15px;transform:scaleX(1.052);">sc032.tiff</div>
<svg width="12.500" height="16" viewBox="0 0 13 17" preserveAspectRatio="none" style="position:absolute;left:1098px;top:478px"><path d="M0.500 0.500H9L12.500 4V16.500H0.500Z" fill="#f4f4f4" stroke="#888" stroke-width="1"/><path d="M9 0.500V4H12.500" fill="#ddd" stroke="#888" stroke-width="0.800"/><circle cx="6" cy="6.500" r="3.200" fill="#3a58b8"/><path d="M3.500 8.500L8.500 4.500" stroke="#e44" stroke-width="1.200"/><rect x="3.500" y="12" width="6" height="2" fill="#999"/></svg>
<div class="t tn" style="left:1118.0px;top:479px;font-size:13px;line-height:15px;transform:scaleX(1.052);">sc033.tiff</div>
<svg width="12.500" height="16" viewBox="0 0 13 17" preserveAspectRatio="none" style="position:absolute;left:1098px;top:496px"><path d="M0.500 0.500H9L12.500 4V16.500H0.500Z" fill="#f4f4f4" stroke="#888" stroke-width="1"/><path d="M9 0.500V4H12.500" fill="#ddd" stroke="#888" stroke-width="0.800"/><circle cx="6" cy="6.500" r="3.200" fill="#3a58b8"/><path d="M3.500 8.500L8.500 4.500" stroke="#e44" stroke-width="1.200"/><rect x="3.500" y="12" width="6" height="2" fill="#999"/></svg>
<div class="t tn" style="left:1118.0px;top:497px;font-size:13px;line-height:15px;transform:scaleX(1.052);">sc034.tiff</div>
<svg width="12.500" height="16" viewBox="0 0 13 17" preserveAspectRatio="none" style="position:absolute;left:1098px;top:514px"><path d="M0.500 0.500H9L12.500 4V16.500H0.500Z" fill="#f4f4f4" stroke="#888" stroke-width="1"/><path d="M9 0.500V4H12.500" fill="#ddd" stroke="#888" stroke-width="0.800"/><circle cx="6" cy="6.500" r="3.200" fill="#3a58b8"/><path d="M3.500 8.500L8.500 4.500" stroke="#e44" stroke-width="1.200"/><rect x="3.500" y="12" width="6" height="2" fill="#999"/></svg>
<div class="t tn" style="left:1118.0px;top:515px;font-size:13px;line-height:15px;transform:scaleX(1.052);">sc035.tiff</div>
<svg width="12.500" height="16" viewBox="0 0 13 17" preserveAspectRatio="none" style="position:absolute;left:1098px;top:532px"><path d="M0.500 0.500H9L12.500 4V16.500H0.500Z" fill="#f4f4f4" stroke="#777" stroke-width="1"/><path d="M9 0.500V4H12.500" fill="#ddd" stroke="#777" stroke-width="0.800"/><path d="M2 5.500H11M2 8.500H11" stroke="#333" stroke-width="1.600" stroke-dasharray="2 1"/><rect x="2.500" y="11" width="8" height="3.500" fill="#555"/></svg>
<div class="t tn" style="left:1118.0px;top:533px;font-size:13px;line-height:15px;transform:scaleX(1.028);">snd029.aif</div>
<svg width="12.500" height="16" viewBox="0 0 13 17" preserveAspectRatio="none" style="position:absolute;left:1098px;top:550px"><path d="M0.500 0.500H9L12.500 4V16.500H0.500Z" fill="#f4f4f4" stroke="#777" stroke-width="1"/><path d="M9 0.500V4H12.500" fill="#ddd" stroke="#777" stroke-width="0.800"/><path d="M2 5.500H11M2 8.500H11" stroke="#333" stroke-width="1.600" stroke-dasharray="2 1"/><rect x="2.500" y="11" width="8" height="3.500" fill="#555"/></svg>
<div class="t tn" style="left:1118.0px;top:551px;font-size:13px;line-height:15px;transform:scaleX(1.028);">snd030.aif</div>
<svg width="12.500" height="16" viewBox="0 0 13 17" preserveAspectRatio="none" style="position:absolute;left:1098px;top:568px"><path d="M0.500 0.500H9L12.500 4V16.500H0.500Z" fill="#f4f4f4" stroke="#777" stroke-width="1"/><path d="M9 0.500V4H12.500" fill="#ddd" stroke="#777" stroke-width="0.800"/><path d="M2 5.500H11M2 8.500H11" stroke="#333" stroke-width="1.600" stroke-dasharray="2 1"/><rect x="2.500" y="11" width="8" height="3.500" fill="#555"/></svg>
<div class="t tn" style="left:1118.0px;top:569px;font-size:13px;line-height:15px;transform:scaleX(1.028);">snd031.aif</div>
<svg width="12.500" height="16" viewBox="0 0 13 17" preserveAspectRatio="none" style="position:absolute;left:1098px;top:586px"><path d="M0.500 0.500H9L12.500 4V16.500H0.500Z" fill="#f4f4f4" stroke="#777" stroke-width="1"/><path d="M9 0.500V4H12.500" fill="#ddd" stroke="#777" stroke-width="0.800"/><path d="M2 5.500H11M2 8.500H11" stroke="#333" stroke-width="1.600" stroke-dasharray="2 1"/><rect x="2.500" y="11" width="8" height="3.500" fill="#555"/></svg>
<div class="t tn" style="left:1118.0px;top:587px;font-size:13px;line-height:15px;transform:scaleX(1.028);">snd032.aif</div>
<svg width="12.500" height="16" viewBox="0 0 13 17" preserveAspectRatio="none" style="position:absolute;left:1098px;top:604px"><path d="M0.500 0.500H9L12.500 4V16.500H0.500Z" fill="#f4f4f4" stroke="#777" stroke-width="1"/><path d="M9 0.500V4H12.500" fill="#ddd" stroke="#777" stroke-width="0.800"/><path d="M2 5.500H11M2 8.500H11" stroke="#333" stroke-width="1.600" stroke-dasharray="2 1"/><rect x="2.500" y="11" width="8" height="3.500" fill="#555"/></svg>
<div class="t tn" style="left:1118.0px;top:605px;font-size:13px;line-height:15px;transform:scaleX(1.028);">snd033.aif</div>
<svg width="12.500" height="16" viewBox="0 0 13 17" preserveAspectRatio="none" style="position:absolute;left:1098px;top:622px"><path d="M0.500 0.500H9L12.500 4V16.500H0.500Z" fill="#f4f4f4" stroke="#777" stroke-width="1"/><path d="M9 0.500V4H12.500" fill="#ddd" stroke="#777" stroke-width="0.800"/><path d="M2 5.500H11M2 8.500H11" stroke="#333" stroke-width="1.600" stroke-dasharray="2 1"/><rect x="2.500" y="11" width="8" height="3.500" fill="#555"/></svg>
<div class="t tn" style="left:1118.0px;top:623px;font-size:13px;line-height:15px;transform:scaleX(1.028);">snd034.aif</div>
<svg width="12.500" height="16" viewBox="0 0 13 17" preserveAspectRatio="none" style="position:absolute;left:1098px;top:640px"><path d="M0.500 0.500H8.500L12.500 4.500V16.500H0.500Z" fill="#f8f8f8" stroke="#999" stroke-width="1"/><path d="M8.500 0.500V4.500H12.500Z" fill="#d8d8d8" stroke="#999" stroke-width="0.800"/></svg>
<div class="t tn" style="left:1118.0px;top:641px;font-size:13px;line-height:15px;transform:scaleX(1.008);">test001</div>
<svg width="12.500" height="16" viewBox="0 0 13 17" preserveAspectRatio="none" style="position:absolute;left:1098px;top:658px"><path d="M0.500 0.500H8.500L12.500 4.500V16.500H0.500Z" fill="#f8f8f8" stroke="#999" stroke-width="1"/><path d="M8.500 0.500V4.500H12.500Z" fill="#d8d8d8" stroke="#999" stroke-width="0.800"/></svg>
<div class="t tn" style="left:1118.0px;top:659px;font-size:13px;line-height:15px;transform:scaleX(1.008);">test002</div>
<svg width="12.500" height="16" viewBox="0 0 13 17" preserveAspectRatio="none" style="position:absolute;left:1098px;top:676px"><path d="M0.500 0.500H8.500L12.500 4.500V16.500H0.500Z" fill="#f8f8f8" stroke="#999" stroke-width="1"/><path d="M8.500 0.500V4.500H12.500Z" fill="#d8d8d8" stroke="#999" stroke-width="0.800"/></svg>
<div class="t tn" style="left:1118.0px;top:677px;font-size:13px;line-height:15px;transform:scaleX(1.008);">test003</div>
<svg width="12.500" height="16" viewBox="0 0 13 17" preserveAspectRatio="none" style="position:absolute;left:1098px;top:694px"><path d="M0.500 0.500H8.500L12.500 4.500V16.500H0.500Z" fill="#f8f8f8" stroke="#999" stroke-width="1"/><path d="M8.500 0.500V4.500H12.500Z" fill="#d8d8d8" stroke="#999" stroke-width="0.800"/></svg>
<div class="t tn" style="left:1118.0px;top:695px;font-size:13px;line-height:15px;transform:scaleX(1.008);">test004</div>
<svg width="16" height="15" style="position:absolute;left:1096px;top:713px"><path d="M1 3.500H6L7.500 2H14.500V13.500H1Z" fill="#dfe6f2" stroke="#889" stroke-width="0.800"/><path d="M1.500 5H14.500V13.500H1.500Z" fill="#8fbcec"/><path d="M1.500 5H14.500V13.500H1.500Z" fill="none" stroke="#6a8fc0" stroke-width="0.600"/></svg>
<svg width="10" height="10" style="position:absolute;left:1074px;top:716px"><path d="M1 0.500L9 5L1 9.500Z" fill="#999"/></svg>
<div class="t tn" style="left:1118.0px;top:713px;font-size:13px;line-height:15px;transform:scaleX(0.974);">wavetable</div>
<div class="t tn" style="left:1079.0px;top:885px;font-size:11px;line-height:12px;color:#222;transform:scaleX(1.076);">18 items, 3,93 GB available</div>
<svg width="14" height="14" style="position:absolute;left:1247px;top:886px"><path d="M1 13L13 1M5 13L13 5M9 13L13 9" stroke="#666"/><path d="M2 13L13 2M6 13L13 6M10 13L13 10" stroke="#eee"/></svg>
<div style="left:1058px;top:632px;width:5px;height:7px;border-radius:50%;background:#222"></div>
<div style="left:0px;top:22px;width:1280px;height:12px;background:linear-gradient(180deg,rgba(20,40,80,0.45),rgba(20,40,80,0.12) 50%,rgba(20,40,80,0))"></div>
<div class="pin" style="left:0px;top:0px;width:1280px;height:22px;border-bottom:1px solid #9a9a9a"></div>
<svg width="1280" height="21" style="position:absolute;left:0px;top:0px"><rect width="1280" height="21" fill="url(#dw)"/></svg>
<svg width="18" height="20" viewBox="0 0 18 20" style="position:absolute;left:19px;top:1px"><defs><linearGradient id="apg" x1="0" y1="0" x2="0" y2="1"><stop offset="0" stop-color="#8fc0f0"/><stop offset="0.5" stop-color="#3f86d8"/><stop offset="1" stop-color="#2a62b8"/></linearGradient></defs><path d="M11.2 0.8C9.6 1.2 8.6 2.6 8.7 4.2C10.3 4.1 11.5 2.6 11.2 0.8Z" fill="url(#apg)"/><path d="M13.9 6.6C12.9 5.4 11.6 5 10.7 5C9.5 5 8.9 5.6 8 5.6C7.1 5.6 6.3 5 5.2 5C3.2 5 1 6.8 1 10.2C1 13.8 3.4 18 5.5 18C6.4 18 6.9 17.4 8 17.4C9.100 17.4 9.5 18 10.5 18C12.300 18 14 15 14.500 13.400C12.100 12.300 11.800 8.300 13.900 6.600Z" fill="url(#apg)"/></svg>
<div class="t tn" style="left:54.7px;top:3px;font-size:14px;line-height:16px;font-weight:bold;transform:scaleX(1.031);">Grab</div>
<div class="t tn" style="left:108.4px;top:3px;font-size:14px;line-height:16px;transform:scaleX(0.975);">File</div>
<div class="t tn" style="left:150.0px;top:3px;font-size:14px;line-height:16px;transform:scaleX(1.011);">Edit</div>
<div style="left:184px;top:0px;width:72px;height:21px;background:linear-gradient(180deg,#3B6FC4,#2C5DB0)"></div>
<div class="t tn" style="left:193.8px;top:3px;font-size:14px;line-height:16px;color:#fff;transform:scaleX(1.064);">Capture</div>
<div class="t tn" style="left:265.6px;top:3px;font-size:14px;line-height:16px;transform:scaleX(1.052);">Window</div>
<div class="t tn" style="left:336.9px;top:3px;font-size:14px;line-height:16px;transform:scaleX(1.007);">Help</div>
<svg width="20" height="16" style="position:absolute;left:1099px;top:3px"><rect x="1" y="0.5" width="17" height="10" rx="1.5" fill="#333" stroke="#111"/><rect x="3" y="2.5" width="13" height="6" fill="#555"/><path d="M1.5 11V14.5H4.5V12.5H14.5V14.5H17.5V11Z" fill="#222"/></svg>
<svg width="17" height="12" style="position:absolute;left:1131px;top:4px" shape-rendering="crispEdges"><rect width="17" height="12" fill="#fff"/><path d="M0 0.5H17M0 2.5H17M0 4.5H17M0 6.5H17M0 8.5H17M0 10.5H17" stroke="#D22" stroke-width="1"/><rect width="8" height="6" fill="#23408f"/></svg>
<svg width="20" height="16" style="position:absolute;left:1158px;top:3px"><path d="M1 5.500H4L8.5 1.500V14.500L4 10.500H1Z" fill="#222"/><path d="M10.500 5.500Q12 8 10.500 10.500M12.800 3.500Q15.500 8 12.800 12.500M15 1.500Q19 8 15 14.500" stroke="#222" stroke-width="1.300" fill="none"/></svg>
<div class="t tn" style="left:1192.5px;top:3px;font-size:14px;line-height:16px;transform:scaleX(1.086);">Thu 12:56</div>
</div></body></html>
